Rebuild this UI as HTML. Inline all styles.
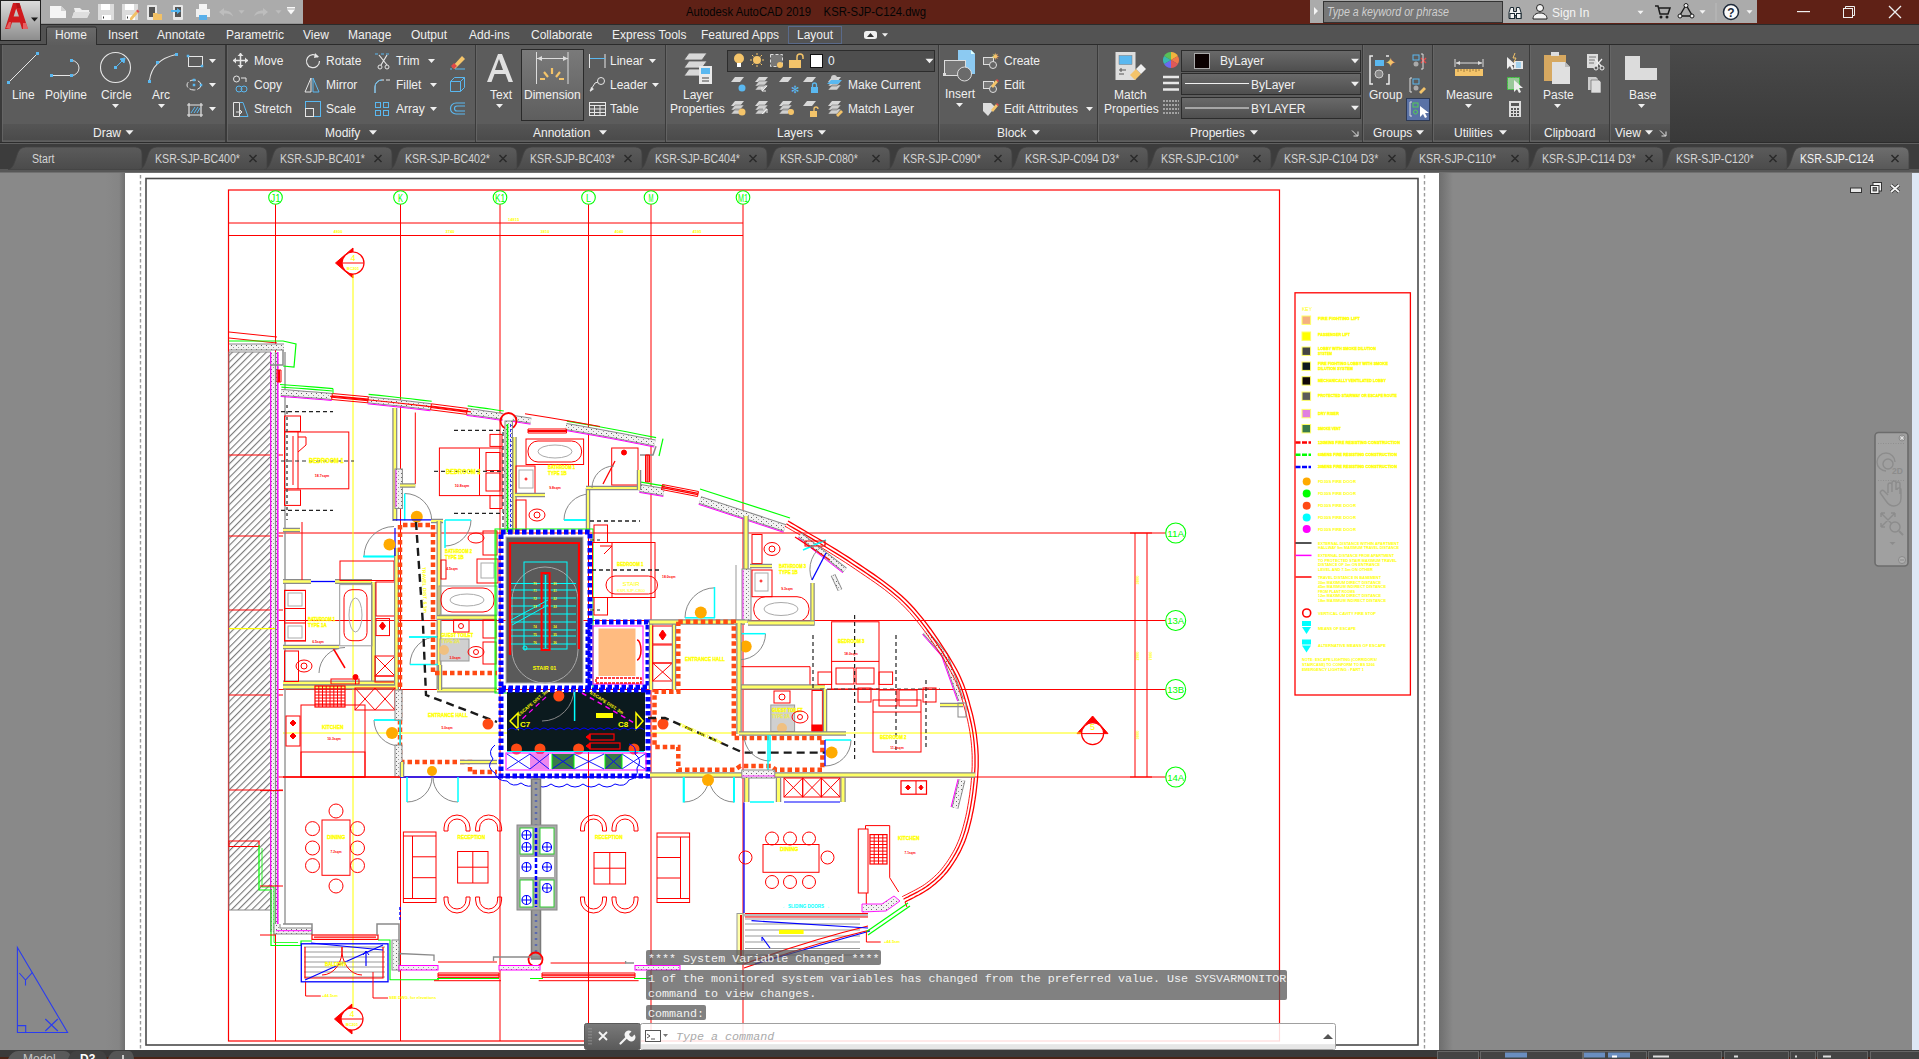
<!DOCTYPE html>
<html><head><meta charset="utf-8">
<style>
*{margin:0;padding:0}
html,body{width:1919px;height:1059px;overflow:hidden;background:#898989}
svg{position:absolute;left:0;top:0;font-family:"Liberation Sans",sans-serif}
</style></head><body>
<svg width="1919" height="1059" viewBox="0 0 1919 1059">
<defs>
<linearGradient id="gLogo" x1="0" y1="0" x2="0" y2="1"><stop offset="0" stop-color="#dcdcdc"/><stop offset="1" stop-color="#8c8c8c"/></linearGradient>
<linearGradient id="gPl" x1="0" y1="0" x2="0" y2="1"><stop offset="0" stop-color="#555"/><stop offset="1" stop-color="#4a4a4a"/></linearGradient>
<linearGradient id="gTab" x1="0" y1="0" x2="0" y2="1"><stop offset="0" stop-color="#5b5b5b"/><stop offset="1" stop-color="#4b4b4b"/></linearGradient>
<linearGradient id="gTabA" x1="0" y1="0" x2="0" y2="1"><stop offset="0" stop-color="#6e6e6e"/><stop offset="1" stop-color="#585858"/></linearGradient>
<linearGradient id="gHome" x1="0" y1="0" x2="0" y2="1"><stop offset="0" stop-color="#6a6a6a"/><stop offset="1" stop-color="#5d5d5d"/></linearGradient>
<linearGradient id="gDim" x1="0" y1="0" x2="0" y2="1"><stop offset="0" stop-color="#7a7a7a"/><stop offset="1" stop-color="#5e5e5e"/></linearGradient>
<linearGradient id="gShadL" x1="0" y1="0" x2="1" y2="0"><stop offset="0" stop-color="#898989"/><stop offset="0.7" stop-color="#858585"/><stop offset="1" stop-color="#707070"/></linearGradient>
<linearGradient id="gShadR" x1="0" y1="0" x2="1" y2="0"><stop offset="0" stop-color="#6e6e6e"/><stop offset="1" stop-color="#898989"/></linearGradient>
<linearGradient id="gRibR" x1="0" y1="0" x2="0" y2="1"><stop offset="0" stop-color="#4a4a4a"/><stop offset="1" stop-color="#393939"/></linearGradient>
<linearGradient id="gCombo" x1="0" y1="0" x2="0" y2="1"><stop offset="0" stop-color="#6a6a6a"/><stop offset="1" stop-color="#4e4e4e"/></linearGradient>
<linearGradient id="gCmd" x1="0" y1="0" x2="0" y2="1"><stop offset="0" stop-color="#7a7a7a"/><stop offset="1" stop-color="#5a5a5a"/></linearGradient>
<pattern id="hatch" width="4.8" height="4.8" patternUnits="userSpaceOnUse" patternTransform="rotate(45)"><rect width="4.8" height="4.8" fill="#fff"/><line x1="0.6" y1="0" x2="0.6" y2="4.8" stroke="#6a6a6a" stroke-width="1"/></pattern>
</defs>

<rect x="0" y="173" width="1919" height="877" fill="#898989"/>
<rect x="105" y="173" width="20" height="877" fill="url(#gShadL)"/>
<rect x="1439" y="173" width="14" height="877" fill="url(#gShadR)"/>
<rect x="1912" y="173" width="7" height="877" fill="#dde7f5"/>
<rect x="125" y="173" width="1314" height="877" fill="#ffffff"/>
<path d="M140.5 175V1050M1424.5 175V1050" stroke="#9a9a9a" stroke-width="1.4" stroke-dasharray="3.5 2.5"/>
<rect x="146" y="178.5" width="1272" height="866.5" fill="none" stroke="#4a4a4a" stroke-width="1.6"/>
<g stroke-linecap="butt">
<rect x="228.5" y="190" width="1051" height="851" stroke="#ff0000" stroke-width="1.2" fill="none"/>
<circle cx="275.5" cy="197.5" r="6.8" stroke="#00ff00" stroke-width="1.1" fill="none"/>
<text x="275.5" y="201.5" font-size="10" fill="#00ff00" text-anchor="middle" textLength="10" lengthAdjust="spacingAndGlyphs">J1</text>
<line x1="275.5" y1="204.5" x2="275.5" y2="1041" stroke="#ff0000" stroke-width="1"/>
<circle cx="400.5" cy="197.5" r="6.8" stroke="#00ff00" stroke-width="1.1" fill="none"/>
<text x="400.5" y="201.5" font-size="10" fill="#00ff00" text-anchor="middle" textLength="5" lengthAdjust="spacingAndGlyphs">K</text>
<line x1="400.5" y1="204.5" x2="400.5" y2="1041" stroke="#ff0000" stroke-width="1"/>
<circle cx="500" cy="197.5" r="6.8" stroke="#00ff00" stroke-width="1.1" fill="none"/>
<text x="500" y="201.5" font-size="10" fill="#00ff00" text-anchor="middle" textLength="10" lengthAdjust="spacingAndGlyphs">K1</text>
<line x1="500" y1="204.5" x2="500" y2="1041" stroke="#ff0000" stroke-width="1"/>
<circle cx="588.5" cy="197.5" r="6.8" stroke="#00ff00" stroke-width="1.1" fill="none"/>
<text x="588.5" y="201.5" font-size="10" fill="#00ff00" text-anchor="middle" textLength="5" lengthAdjust="spacingAndGlyphs">L</text>
<line x1="588.5" y1="204.5" x2="588.5" y2="1041" stroke="#ff0000" stroke-width="1"/>
<circle cx="651" cy="197.5" r="6.8" stroke="#00ff00" stroke-width="1.1" fill="none"/>
<text x="651" y="201.5" font-size="10" fill="#00ff00" text-anchor="middle" textLength="5" lengthAdjust="spacingAndGlyphs">M</text>
<line x1="651" y1="204.5" x2="651" y2="1041" stroke="#ff0000" stroke-width="1"/>
<circle cx="743" cy="197.5" r="6.8" stroke="#00ff00" stroke-width="1.1" fill="none"/>
<text x="743" y="201.5" font-size="10" fill="#00ff00" text-anchor="middle" textLength="10" lengthAdjust="spacingAndGlyphs">M1</text>
<line x1="743" y1="204.5" x2="743" y2="1041" stroke="#ff0000" stroke-width="1"/>
<line x1="228" y1="223" x2="743" y2="223" stroke="#ff0000" stroke-width="1"/>
<line x1="228" y1="235.5" x2="743" y2="235.5" stroke="#ff0000" stroke-width="1"/>
<text x="338" y="233" font-size="4" fill="#ffff00" text-anchor="middle" font-weight="bold" >4800</text>
<text x="450" y="233" font-size="4" fill="#ffff00" text-anchor="middle" font-weight="bold" >3740</text>
<text x="545" y="233" font-size="4" fill="#ffff00" text-anchor="middle" font-weight="bold" >3810</text>
<text x="619" y="233" font-size="4" fill="#ffff00" text-anchor="middle" font-weight="bold" >4040</text>
<text x="697" y="233" font-size="4" fill="#ffff00" text-anchor="middle" font-weight="bold" >4595</text>
<text x="508" y="220.5" font-size="4" fill="#ffff00" text-anchor="start" font-weight="bold" >14815</text>
<line x1="228" y1="533" x2="1165.5" y2="533" stroke="#ff0000" stroke-width="1"/>
<circle cx="1175.7" cy="533" r="10" stroke="#00ff00" stroke-width="1.1" fill="none"/>
<text x="1175.7" y="536.5" font-size="9" fill="#00ff00" text-anchor="middle" textLength="17" lengthAdjust="spacingAndGlyphs">11A</text>
<line x1="228" y1="620.5" x2="1165.5" y2="620.5" stroke="#ff0000" stroke-width="1"/>
<circle cx="1175.7" cy="620.5" r="10" stroke="#00ff00" stroke-width="1.1" fill="none"/>
<text x="1175.7" y="624" font-size="9" fill="#00ff00" text-anchor="middle" textLength="17" lengthAdjust="spacingAndGlyphs">13A</text>
<line x1="228" y1="689.5" x2="1165.5" y2="689.5" stroke="#ff0000" stroke-width="1"/>
<circle cx="1175.7" cy="689.5" r="10" stroke="#00ff00" stroke-width="1.1" fill="none"/>
<text x="1175.7" y="693" font-size="9" fill="#00ff00" text-anchor="middle" textLength="17" lengthAdjust="spacingAndGlyphs">13B</text>
<line x1="228" y1="777" x2="1165.5" y2="777" stroke="#ff0000" stroke-width="1"/>
<circle cx="1175.7" cy="777" r="10" stroke="#00ff00" stroke-width="1.1" fill="none"/>
<text x="1175.7" y="780.5" font-size="9" fill="#00ff00" text-anchor="middle" textLength="17" lengthAdjust="spacingAndGlyphs">14A</text>
<line x1="1135" y1="533" x2="1135" y2="777" stroke="#ff0000" stroke-width="1"/>
<line x1="1147" y1="533" x2="1147" y2="777" stroke="#ff0000" stroke-width="1"/>
<line x1="1130" y1="533" x2="1152" y2="533" stroke="#ff0000" stroke-width="1"/>
<line x1="1130" y1="620.5" x2="1152" y2="620.5" stroke="#ff0000" stroke-width="1"/>
<line x1="1130" y1="689.5" x2="1152" y2="689.5" stroke="#ff0000" stroke-width="1"/>
<line x1="1130" y1="777" x2="1152" y2="777" stroke="#ff0000" stroke-width="1"/>
<text x="1139" y="580" font-size="4" fill="#ffff00" text-anchor="middle" font-weight="bold" transform="rotate(-90 1139 580)">3000</text>
<text x="1139" y="656" font-size="4" fill="#ffff00" text-anchor="middle" font-weight="bold" transform="rotate(-90 1139 656)">2000</text>
<text x="1139" y="735" font-size="4" fill="#ffff00" text-anchor="middle" font-weight="bold" transform="rotate(-90 1139 735)">3000</text>
<text x="1152" y="656" font-size="4" fill="#ffff00" text-anchor="middle" font-weight="bold" transform="rotate(-90 1152 656)">7000</text>
<path d="M335.5 263 L353 248 L353 278 Z" stroke="#ff0000" stroke-width="1" fill="#ff0000" />
<circle cx="353" cy="263" r="11" stroke="#ff0000" stroke-width="1.2" fill="#fff"/>
<line x1="342" y1="263" x2="364" y2="263" stroke="#ff0000" stroke-width="1"/>
<text x="353" y="260.5" font-size="9" fill="#ffff00" text-anchor="middle" >4</text>
<text x="353" y="270" font-size="4" fill="#ffff00" text-anchor="middle" font-weight="bold" >BC201</text>
<path d="M334.5 1019 L352 1004 L352 1034 Z" stroke="#ff0000" stroke-width="1" fill="#ff0000" />
<circle cx="352" cy="1019" r="11" stroke="#ff0000" stroke-width="1.2" fill="#fff"/>
<line x1="341" y1="1019" x2="363" y2="1019" stroke="#ff0000" stroke-width="1"/>
<text x="352" y="1016.5" font-size="9" fill="#ffff00" text-anchor="middle" >4</text>
<text x="352" y="1026" font-size="4" fill="#ffff00" text-anchor="middle" font-weight="bold" >BC201</text>
<path d="M1077 733.6 L1092.6 716 L1108 733.6 Z" stroke="#ff0000" stroke-width="1" fill="#ff0000" />
<circle cx="1092.6" cy="733.6" r="11" stroke="#ff0000" stroke-width="1.2" fill="#fff"/>
<line x1="1081.6" y1="733.6" x2="1103.6" y2="733.6" stroke="#ff0000" stroke-width="1"/>
<text x="1092.6" y="730" font-size="9" fill="#ffff00" text-anchor="middle" >5</text>
<line x1="353" y1="275" x2="353" y2="1007" stroke="#ffff00" stroke-width="1"/>
<line x1="283" y1="733" x2="1081" y2="733" stroke="#ffff00" stroke-width="1"/>
<defs><pattern id="dots" width="5" height="4" patternUnits="userSpaceOnUse"><rect width="5" height="4" fill="#f2f2f2"/><rect x="1" y="1" width="1" height="1" fill="#666"/><rect x="3" y="3" width="1" height="1" fill="#999"/></pattern></defs>
<rect x="229" y="352" width="41.5" height="558" fill="url(#hatch)" stroke="#888" stroke-width="1"/>
<line x1="229" y1="455" x2="283" y2="455" stroke="#ff0000" stroke-width="1"/>
<line x1="229" y1="536" x2="283" y2="536" stroke="#ff0000" stroke-width="1"/>
<line x1="229" y1="610" x2="283" y2="610" stroke="#ff0000" stroke-width="1"/>
<line x1="229" y1="695" x2="283" y2="695" stroke="#ff0000" stroke-width="1"/>
<line x1="229" y1="790" x2="283" y2="790" stroke="#ff0000" stroke-width="1"/>
<rect x="229" y="841" width="30" height="5.5" stroke="#ff0000" stroke-width="1" fill="none"/>
<rect x="271" y="352" width="7.5" height="580" fill="url(#dots)"/>
<line x1="270.7" y1="352" x2="270.7" y2="932" stroke="#ff00ff" stroke-width="1.2"/>
<line x1="275.5" y1="352" x2="275.5" y2="932" stroke="#888" stroke-width="1.2"/>
<line x1="277.8" y1="352" x2="277.8" y2="932" stroke="#ff00ff" stroke-width="1.4"/>
<line x1="285" y1="352" x2="285" y2="924" stroke="#8a8a8a" stroke-width="1.3"/>
<line x1="229" y1="628.7" x2="275" y2="628.7" stroke="#ffff00" stroke-width="1.2"/>
<line x1="229" y1="332" x2="277" y2="337" stroke="#ff0000" stroke-width="1"/>
<line x1="229" y1="338" x2="277" y2="343" stroke="#ff0000" stroke-width="1"/>
<path d="M229 341 L283 341 L296 344 L294 367 L283 366" stroke="#00ff00" stroke-width="1.2" fill="none"/>
<path d="M229.0 347.0 L284.0 347.0" stroke="#8a8a8a" stroke-width="7" fill="none"/>
<path d="M229.0 347.0 L284.0 347.0" stroke="url(#dots)" stroke-width="5" fill="none"/>
<path d="M283 350 L283 365 L270 365" stroke="#8a8a8a" stroke-width="1.5" fill="none"/>
<path d="M277 370 L277 382 L281 382 L281 370 Z" stroke="#ff0000" stroke-width="1" fill="none"/>
<line x1="278.5" y1="370" x2="278.5" y2="382" stroke="#ff0000" stroke-width="1.1"/>
<line x1="279.5" y1="370" x2="279.5" y2="382" stroke="#ff0000" stroke-width="1.1"/>
<path d="M281.0 392.5 L289.5 393.1 L298.0 393.8 L306.5 394.4 L315.0 395.1 L323.5 395.8 L332.0 396.5" stroke="#8a8a8a" stroke-width="7" fill="none"/>
<path d="M281.0 392.5 L289.5 393.1 L298.0 393.8 L306.5 394.4 L315.0 395.1 L323.5 395.8 L332.0 396.5" stroke="url(#dots)" stroke-width="5" fill="none"/>
<path d="M281.4 387.1 L289.9 387.7 L298.4 388.3 L306.9 388.9 L315.4 389.6 L324 390.3 L332.5 391" stroke="#00ff00" stroke-width="1.1" fill="none"/>
<path d="M280.7 396.5 L289.2 397.1 L297.7 397.7 L306.2 398.4 L314.7 399.1 L323.2 399.7 L331.7 400.5" stroke="#ff00ff" stroke-width="1" fill="none"/>
<path d="M368.0 399.8 L378.5 400.9 L389.0 402.0 L399.5 403.1 L410.0 404.3 L420.5 405.5 L431.0 406.8" stroke="#8a8a8a" stroke-width="7" fill="none"/>
<path d="M368.0 399.8 L378.5 400.9 L389.0 402.0 L399.5 403.1 L410.0 404.3 L420.5 405.5 L431.0 406.8" stroke="url(#dots)" stroke-width="5" fill="none"/>
<path d="M368.6 394.4 L379.1 395.4 L389.6 396.5 L400.1 397.7 L410.6 398.8 L421.2 400.1 L431.7 401.3" stroke="#00ff00" stroke-width="1.1" fill="none"/>
<path d="M367.6 403.8 L378.1 404.9 L388.6 406 L399.1 407.1 L409.5 408.3 L420 409.5 L430.5 410.8" stroke="#ff00ff" stroke-width="1" fill="none"/>
<path d="M467.0 411.4 L473.0 412.2 L479.0 413.0 L485.0 413.9 L491.0 414.7 L497.0 415.6 L503.0 416.5" stroke="#8a8a8a" stroke-width="7" fill="none"/>
<path d="M467.0 411.4 L473.0 412.2 L479.0 413.0 L485.0 413.9 L491.0 414.7 L497.0 415.6 L503.0 416.5" stroke="url(#dots)" stroke-width="5" fill="none"/>
<path d="M467.7 405.9 L473.8 406.8 L479.8 407.6 L485.8 408.4 L491.8 409.3 L497.8 410.2 L503.8 411" stroke="#00ff00" stroke-width="1.1" fill="none"/>
<path d="M466.5 415.4 L472.5 416.2 L478.4 417 L484.4 417.8 L490.4 418.7 L496.4 419.6 L502.4 420.4" stroke="#ff00ff" stroke-width="1" fill="none"/>
<path d="M566.0 426.5 L580.8 429.0 L595.7 431.7 L610.5 434.4 L625.3 437.2 L640.2 440.1 L655.0 443.0" stroke="#8a8a8a" stroke-width="7" fill="none"/>
<path d="M566.0 426.5 L580.8 429.0 L595.7 431.7 L610.5 434.4 L625.3 437.2 L640.2 440.1 L655.0 443.0" stroke="url(#dots)" stroke-width="5" fill="none"/>
<path d="M566.9 421.1 L581.8 423.6 L596.7 426.3 L611.5 429 L626.4 431.8 L641.2 434.7 L656.1 437.6" stroke="#00ff00" stroke-width="1.1" fill="none"/>
<path d="M565.3 430.4 L580.1 433 L594.9 435.6 L609.8 438.3 L624.6 441.1 L639.4 444 L654.2 447" stroke="#ff00ff" stroke-width="1" fill="none"/>
<path d="M513.0 418.0 L522.0 419.3 L531.0 420.7" stroke="#8a8a8a" stroke-width="6" fill="none"/>
<path d="M513.0 418.0 L522.0 419.3 L531.0 420.7" stroke="url(#dots)" stroke-width="4" fill="none"/>
<path d="M512.5 421.4 L521.5 422.8 L530.5 424.2" stroke="#ff00ff" stroke-width="1" fill="none"/>
<path d="M331.7 399.5 L367.7 402.8 L368.3 396.8 L332.3 393.5 Z" stroke="#ff0000" stroke-width="1" fill="none"/>
<line x1="331.9" y1="397.2" x2="367.9" y2="400.6" stroke="#ff0000" stroke-width="1.1"/>
<line x1="332.1" y1="395.7" x2="368.1" y2="399.1" stroke="#ff0000" stroke-width="1.1"/>
<path d="M430.6 409.8 L466.6 414.4 L467.4 408.4 L431.4 403.8 Z" stroke="#ff0000" stroke-width="1" fill="none"/>
<line x1="430.9" y1="407.5" x2="466.9" y2="412.1" stroke="#ff0000" stroke-width="1.1"/>
<line x1="431.1" y1="406" x2="467.1" y2="410.7" stroke="#ff0000" stroke-width="1.1"/>
<path d="M330 396.3 L353.5 398.4 L377 400.7 L400.5 403.2 L424 405.9 L447.5 408.8 L471 411.9" stroke="#ff0000" stroke-width="1.1" fill="none"/>
<path d="M525 413.8 L550 417.8 L575 422 L600 426.5" stroke="#ff0000" stroke-width="1.1" fill="none"/>
<path d="M280 384.5 L297.7 385.7 L315.3 387.1 L333 388.6" stroke="#00ff00" stroke-width="1.1" fill="none"/>
<line x1="333" y1="388.6" x2="333" y2="393.6" stroke="#00ff00" stroke-width="1"/>
<path d="M663 438.7 L659 456" stroke="#00ff00" stroke-width="1.2" fill="none"/>
<path d="M656 446.2 L653 455 L640 455" stroke="#8a8a8a" stroke-width="1.5" fill="none"/>
<path d="M528 433 L566.5 433 L566.5 429 L528 429 Z" stroke="#ff0000" stroke-width="1" fill="none"/>
<line x1="528" y1="431.5" x2="566.5" y2="431.5" stroke="#ff0000" stroke-width="1.1"/>
<line x1="528" y1="430.5" x2="566.5" y2="430.5" stroke="#ff0000" stroke-width="1.1"/>
<circle cx="508.5" cy="421" r="8" stroke="#ff0000" stroke-width="1.8" fill="none"/>
<path d="M645.5 455 L645.5 482 L649.5 482 L649.5 455 Z" stroke="#ff0000" stroke-width="1" fill="none"/>
<line x1="647" y1="455" x2="647" y2="482" stroke="#ff0000" stroke-width="1.1"/>
<line x1="648" y1="455" x2="648" y2="482" stroke="#ff0000" stroke-width="1.1"/>
<path d="M640.0 488.0 L664.0 492.0" stroke="#8a8a8a" stroke-width="8" fill="none"/>
<path d="M640.0 488.0 L664.0 492.0" stroke="url(#dots)" stroke-width="6" fill="none"/>
<path d="M641 482.1 L665 486.1" stroke="#00ff00" stroke-width="1.1" fill="none"/>
<path d="M639.3 492.4 L663.3 496.4" stroke="#ff00ff" stroke-width="1" fill="none"/>
<path d="M661.5 489.5 L697.5 496.5 L698.5 491.5 L662.5 484.5 Z" stroke="#ff0000" stroke-width="1" fill="none"/>
<line x1="661.9" y1="487.6" x2="697.9" y2="494.6" stroke="#ff0000" stroke-width="1.1"/>
<line x1="662.1" y1="486.4" x2="698.1" y2="493.4" stroke="#ff0000" stroke-width="1.1"/>
<path d="M700.0 500.0 L785.0 528.0" stroke="#8a8a8a" stroke-width="8" fill="none"/>
<path d="M700.0 500.0 L785.0 528.0" stroke="url(#dots)" stroke-width="6" fill="none"/>
<path d="M698.6 504.3 L783.6 532.3" stroke="#ff00ff" stroke-width="1" fill="none"/>
<line x1="700" y1="489" x2="790" y2="518" stroke="#00ff00" stroke-width="1.2"/>
<path d="M925.0 632.0 L945.0 655.0 L961.0 700.0" stroke="#8a8a8a" stroke-width="6" fill="none"/>
<path d="M925.0 632.0 L945.0 655.0 L961.0 700.0" stroke="url(#dots)" stroke-width="4" fill="none"/>
<path d="M922.4 634.3 L941.7 656.2 L957.7 701.2" stroke="#ff00ff" stroke-width="1" fill="none"/>
<path d="M788 521 L791.2 522.9 L795.3 525.3 L800.1 528.1 L805.5 531.3 L811.3 534.7 L817.5 538.3 L823.9 542.1 L830.3 546 L836.7 549.9 L842.8 553.7 L848.6 557.4 L854 561 L859.1 564.4 L864.1 567.8 L869 571.1 L873.9 574.4 L878.6 577.8 L883.4 581.2 L888 584.7 L892.6 588.2 L897.1 591.9 L901.5 595.8 L905.8 599.8 L910 604 L914.2 608.5 L918.3 613.3 L922.5 618.4 L926.6 623.6 L930.6 629 L934.4 634.4 L938.2 639.9 L941.8 645.3 L945.2 650.5 L948.4 655.6 L951.3 660.5 L954 665 L956.4 669.3 L958.5 673.3 L960.4 677.2 L962 681 L963.5 684.6 L964.8 688.1 L966 691.6 L967.1 695 L968.1 698.5 L969.1 701.9 L970 705.4 L971 709 L972 712.6 L972.9 716.2 L973.7 719.8 L974.4 723.4 L975.1 727 L975.7 730.5 L976.3 734.1 L976.7 737.7 L977.1 741.2 L977.5 744.8 L977.8 748.4 L978 752 L978.2 755.6 L978.2 759.2 L978.2 762.9 L978.2 766.5 L978 770.2 L977.8 773.8 L977.6 777.5 L977.3 781.1 L976.9 784.8 L976.5 788.4 L976.1 792 L975.6 795.6 L975.1 799.2 L974.5 802.9 L973.9 806.6 L973.2 810.3 L972.4 814 L971.7 817.7 L970.8 821.3 L969.9 824.8 L969 828.3 L968.1 831.7 L967 834.9 L966 838 L964.9 841 L963.8 843.8 L962.5 846.6 L961.3 849.3 L960 851.9 L958.6 854.4 L957.3 856.8 L955.9 859.2 L954.4 861.5 L953 863.7 L951.5 865.9 L950 868 L948.5 870 L947 872 L945.4 873.8 L943.8 875.6 L942.2 877.3 L940.6 879 L938.9 880.6 L937.2 882.1 L935.4 883.7 L933.7 885.1 L931.9 886.6 L930 888 L928 889.4 L925.8 890.8 L923.5 892.2 L921.1 893.6 L918.7 895 L916.2 896.2 L913.9 897.5 L911.7 898.6 L909.6 899.6 L907.8 900.5 L906.2 901.3 L905 902" stroke="#ff0000" stroke-width="1.3" fill="none"/>
<path d="M786.4 523.7 L789.6 525.7 L793.7 528.1 L798.5 530.9 L803.9 534 L809.7 537.4 L815.9 541.1 L822.2 544.8 L828.6 548.7 L835 552.6 L841.1 556.4 L846.9 560.1 L852.2 563.7 L857.3 567.1 L862.3 570.4 L867.2 573.8 L872 577.1 L876.8 580.4 L881.5 583.8 L886.1 587.2 L890.6 590.7 L895 594.4 L899.3 598.1 L903.6 602.1 L907.7 606.2 L911.8 610.6 L915.9 615.4 L920 620.4 L924 625.6 L928 630.9 L931.8 636.3 L935.5 641.7 L939.1 647 L942.5 652.2 L945.6 657.3 L948.6 662.1 L951.2 666.6 L953.6 670.8 L955.7 674.8 L957.5 678.6 L959.1 682.2 L960.5 685.7 L961.8 689.2 L963 692.6 L964 696 L965 699.4 L966 702.8 L966.9 706.3 L967.9 709.8 L968.9 713.4 L969.7 717 L970.5 720.5 L971.3 724 L972 727.5 L972.6 731 L973.1 734.5 L973.6 738.1 L974 741.6 L974.3 745.1 L974.6 748.6 L974.8 752.2 L975 755.7 L975 759.3 L975 762.9 L975 766.4 L974.8 770 L974.6 773.6 L974.4 777.2 L974.1 780.8 L973.7 784.4 L973.3 788 L972.9 791.6 L972.4 795.2 L971.9 798.7 L971.3 802.4 L970.7 806 L970 809.7 L969.3 813.3 L968.5 817 L967.7 820.5 L966.8 824 L965.9 827.4 L965 830.7 L964 833.9 L963 836.9 L961.9 839.8 L960.8 842.6 L959.6 845.3 L958.4 847.9 L957.1 850.4 L955.8 852.9 L954.5 855.2 L953.1 857.5 L951.7 859.8 L950.3 861.9 L948.9 864.1 L947.4 866.1 L945.9 868.1 L944.5 870 L943 871.8 L941.5 873.5 L939.9 875.1 L938.3 876.7 L936.7 878.3 L935.1 879.8 L933.4 881.2 L931.7 882.6 L929.9 884.1 L928.1 885.4 L926.2 886.8 L924.1 888.1 L921.9 889.5 L919.5 890.8 L917.2 892.2 L914.8 893.4 L912.4 894.6 L910.2 895.7 L908.2 896.8 L906.3 897.7 L904.7 898.5 L903.5 899.2" stroke="#ff0000" stroke-width="1.3" fill="none"/>
<path d="M784.9 526.2 L788.2 528.1 L792.3 530.5 L797.1 533.3 L802.5 536.4 L808.3 539.9 L814.4 543.5 L820.8 547.2 L827.2 551.1 L833.5 555 L839.6 558.8 L845.4 562.5 L850.7 566 L855.7 569.4 L860.7 572.8 L865.6 576.1 L870.4 579.4 L875.2 582.7 L879.8 586 L884.4 589.4 L888.8 592.9 L893.2 596.5 L897.5 600.2 L901.6 604.1 L905.7 608.2 L909.7 612.5 L913.7 617.2 L917.8 622.1 L921.8 627.3 L925.7 632.5 L929.5 637.9 L933.2 643.2 L936.8 648.6 L940.1 653.7 L943.3 658.8 L946.2 663.5 L948.8 668 L951.1 672.1 L953.1 676 L954.9 679.7 L956.5 683.3 L957.9 686.8 L959.2 690.1 L960.3 693.5 L961.3 696.8 L962.3 700.1 L963.3 703.5 L964.2 707 L965.2 710.6 L966.2 714.1 L967 717.6 L967.8 721.1 L968.5 724.6 L969.2 728 L969.8 731.5 L970.3 734.9 L970.8 738.4 L971.2 741.9 L971.5 745.3 L971.8 748.8 L972 752.3 L972.2 755.8 L972.2 759.3 L972.2 762.8 L972.2 766.4 L972 769.9 L971.8 773.5 L971.6 777 L971.3 780.6 L971 784.1 L970.6 787.7 L970.1 791.2 L969.7 794.8 L969.1 798.3 L968.6 801.9 L967.9 805.5 L967.3 809.2 L966.6 812.8 L965.8 816.4 L965 819.9 L964.1 823.3 L963.2 826.7 L962.3 829.9 L961.3 833.1 L960.3 836 L959.3 838.8 L958.2 841.5 L957.1 844.1 L955.9 846.7 L954.7 849.1 L953.4 851.5 L952.1 853.8 L950.7 856.1 L949.4 858.3 L948 860.4 L946.6 862.5 L945.1 864.5 L943.7 866.4 L942.3 868.2 L940.9 869.9 L939.4 871.6 L937.9 873.2 L936.4 874.7 L934.8 876.2 L933.2 877.7 L931.6 879.1 L929.9 880.5 L928.2 881.8 L926.4 883.2 L924.6 884.5 L922.6 885.8 L920.5 887.1 L918.2 888.4 L915.8 889.7 L913.5 890.9 L911.2 892.1 L909 893.2 L906.9 894.3 L905.1 895.2 L903.4 896 L902.2 896.7" stroke="#ff0000" stroke-width="0.9" fill="none"/>
<path d="M905 902 L907 907" stroke="#ff0000" stroke-width="1" fill="none"/>
<path d="M833.0 575.0 L840.0 590.0" stroke="#8a8a8a" stroke-width="5" fill="none"/>
<path d="M833.0 575.0 L840.0 590.0" stroke="url(#dots)" stroke-width="3" fill="none"/>
<path d="M800.0 535.0 L845.0 570.0" stroke="#8a8a8a" stroke-width="6" fill="none"/>
<path d="M800.0 535.0 L845.0 570.0" stroke="url(#dots)" stroke-width="4" fill="none"/>
<path d="M797.9 537.8 L842.9 572.8" stroke="#ff00ff" stroke-width="1" fill="none"/>
<path d="M795 537 L830 560" stroke="#ff0000" stroke-width="1.2" fill="none"/>
<line x1="281" y1="411.7" x2="333" y2="411.7" stroke="#222" stroke-width="1.3" stroke-dasharray="4 3"/>
<line x1="281" y1="510.3" x2="333" y2="510.3" stroke="#222" stroke-width="1.3" stroke-dasharray="4 3"/>
<rect x="284.5" y="416" width="16" height="15.4" stroke="#ff0000" stroke-width="1" fill="none"/>
<rect x="284.5" y="490" width="16" height="15.4" stroke="#ff0000" stroke-width="1" fill="none"/>
<rect x="284.5" y="432" width="64.3" height="56.8" stroke="#ff0000" stroke-width="1" fill="none"/>
<line x1="298" y1="432" x2="298" y2="489" stroke="#ff0000" stroke-width="1"/>
<line x1="293" y1="436" x2="293" y2="485" stroke="#ff0000" stroke-width="1"/>
<path d="M298 437 L306 437 L306 445 L298 452" stroke="#ff0000" stroke-width="1" fill="none" />
<line x1="281" y1="461" x2="354" y2="461" stroke="#333" stroke-width="1.2" stroke-dasharray="4 3"/>
<text x="309" y="463" font-size="7.199999999999999" fill="#ffff00" text-anchor="start" font-weight="bold" stroke="#ffff00" stroke-width="0.35" textLength="34.6" lengthAdjust="spacingAndGlyphs">BEDROOM 1</text>
<text x="322" y="477" font-size="3.6" fill="#ff0000" text-anchor="middle" font-weight="bold" >18.7sqm</text>
<line x1="287" y1="405" x2="287" y2="520" stroke="#444" stroke-width="1.4" stroke-dasharray="3 3"/>
<path d="M394.8 408.0 L394.8 521.0" stroke="#8a8a8a" stroke-width="5.0" fill="none"/>
<path d="M394.8 408.0 L394.8 521.0" stroke="#ffff66" stroke-width="2.5" fill="none"/>
<rect x="395" y="469" width="7.4" height="39.5" stroke="#8a8a8a" stroke-width="1" fill="url(#dots)"/>
<line x1="396" y1="470" x2="396" y2="507" stroke="#ff00ff" stroke-width="0.8"/>
<line x1="415.3" y1="412.5" x2="415.3" y2="484" stroke="#ff0000" stroke-width="1"/>
<path d="M400.0 485.5 L415.3 485.5" stroke="#8a8a8a" stroke-width="4.5" fill="none"/>
<path d="M400.0 485.5 L415.3 485.5" stroke="#ffff66" stroke-width="2" fill="none"/>
<path d="M404.7 493.5 A27 27 0 0 1 431.7 520.5" stroke="#888" stroke-width="1" fill="none" />
<line x1="404.7" y1="520.5" x2="404.7" y2="493.5" stroke="#00ffff" stroke-width="1.5"/>
<circle cx="416.8" cy="516.8" r="6" stroke="#ffaa00" stroke-width="0" fill="#ffaa00"/>
<line x1="393" y1="519.8" x2="431" y2="519.8" stroke="#0000ff" stroke-width="1.2"/>
<path d="M431.0 521.0 L443.0 521.0" stroke="#8a8a8a" stroke-width="4.5" fill="none"/>
<path d="M431.0 521.0 L443.0 521.0" stroke="#ffff66" stroke-width="2" fill="none"/>
<line x1="454" y1="430.3" x2="504" y2="430.3" stroke="#222" stroke-width="1.3" stroke-dasharray="4 3"/>
<line x1="454" y1="513.3" x2="504" y2="513.3" stroke="#222" stroke-width="1.3" stroke-dasharray="4 3"/>
<rect x="490" y="434.4" width="12" height="12" stroke="#ff0000" stroke-width="1" fill="none"/>
<rect x="490" y="495.6" width="12" height="12.9" stroke="#ff0000" stroke-width="1" fill="none"/>
<rect x="439.4" y="448" width="62.6" height="47.6" stroke="#ff0000" stroke-width="1" fill="none"/>
<line x1="479.5" y1="448" x2="479.5" y2="495.6" stroke="#ff0000" stroke-width="1"/>
<rect x="486" y="452.5" width="14" height="18" stroke="#ff0000" stroke-width="1" fill="none"/>
<rect x="486" y="473" width="14" height="18" stroke="#ff0000" stroke-width="1" fill="none"/>
<line x1="434" y1="471.4" x2="510" y2="471.4" stroke="#333" stroke-width="1.2" stroke-dasharray="4 3"/>
<text x="446" y="473.5" font-size="7.199999999999999" fill="#ffff00" text-anchor="start" font-weight="bold" stroke="#ffff00" stroke-width="0.35" textLength="34.6" lengthAdjust="spacingAndGlyphs">BEDROOM 2</text>
<text x="462" y="487" font-size="3.6" fill="#ff0000" text-anchor="middle" font-weight="bold" >10.8sqm</text>
<rect x="505" y="421" width="7.5" height="112" fill="url(#dots)" stroke="#8a8a8a" stroke-width="1"/>
<line x1="507.5" y1="424" x2="507.5" y2="532" stroke="#00ff00" stroke-width="1.6"/>
<line x1="510.5" y1="424" x2="510.5" y2="532" stroke="#0000ff" stroke-width="0.8" stroke-dasharray="3 2"/>
<line x1="503" y1="432" x2="503" y2="532" stroke="#333" stroke-width="1.2" stroke-dasharray="4 3"/>
<path d="M514.5 437.0 L514.5 532.0" stroke="#8a8a8a" stroke-width="4.5" fill="none"/>
<path d="M514.5 437.0 L514.5 532.0" stroke="#ffff66" stroke-width="2" fill="none"/>
<rect x="526" y="439" width="57.6" height="25.5" stroke="#ff0000" stroke-width="1" fill="none"/>
<rect x="528" y="441" width="53.6" height="21" stroke="#ff0000" stroke-width="1" fill="none" rx="10"/>
<ellipse cx="555" cy="451.5" rx="17" ry="6.5" stroke="#aaa" fill="none" stroke-width="1"/>
<rect x="516" y="466" width="19" height="28" stroke="#ff0000" stroke-width="1" fill="none"/>
<rect x="519" y="470" width="14" height="18" stroke="#aaa" stroke-width="1" fill="none"/>
<circle cx="526" cy="479" r="1" stroke="#ff0000" stroke-width="1" fill="none"/>
<path d="M515.0 495.0 L545.0 495.0" stroke="#8a8a8a" stroke-width="4.5" fill="none"/>
<path d="M515.0 495.0 L545.0 495.0" stroke="#ffff66" stroke-width="2" fill="none"/>
<rect x="516" y="500" width="10" height="30" stroke="#ff0000" stroke-width="1" fill="none"/>
<ellipse cx="537" cy="515" rx="8" ry="6" stroke="#f00" fill="none"/>
<circle cx="537" cy="515" r="3" stroke="#ff0000" stroke-width="1" fill="none"/>
<text x="548" y="469" font-size="5.04" fill="#ffff00" text-anchor="start" font-weight="bold" stroke="#ffff00" stroke-width="0.35" textLength="26.9" lengthAdjust="spacingAndGlyphs">BATHROOM 1</text>
<text x="548" y="475" font-size="5.04" fill="#ffff00" text-anchor="start" font-weight="bold" stroke="#ffff00" stroke-width="0.35" textLength="18.8" lengthAdjust="spacingAndGlyphs">TYPE 1B</text>
<text x="555" y="489" font-size="3.4" fill="#ff0000" text-anchor="middle" font-weight="bold" >9.8sqm</text>
<path d="M564.0 520.0 A26 26 0 0 1 590.0 494.0" stroke="#888" stroke-width="1" fill="none" />
<line x1="590" y1="520" x2="564" y2="520" stroke="#00ffff" stroke-width="1.5"/>
<line x1="564" y1="520" x2="588" y2="520" stroke="#00ffff" stroke-width="1.5"/>
<path d="M588.0 488.0 L588.0 532.0" stroke="#8a8a8a" stroke-width="4.5" fill="none"/>
<path d="M588.0 488.0 L588.0 532.0" stroke="#ffff66" stroke-width="2" fill="none"/>
<path d="M586.0 488.0 L640.0 488.0" stroke="#8a8a8a" stroke-width="4.5" fill="none"/>
<path d="M586.0 488.0 L640.0 488.0" stroke="#ffff66" stroke-width="2" fill="none"/>
<rect x="611.7" y="448" width="26.3" height="37" stroke="#ff0000" stroke-width="1" fill="none"/>
<circle cx="624" cy="452.5" r="2.5" stroke="#ff0000" stroke-width="1" fill="#ff0000"/>
<line x1="603" y1="484" x2="615" y2="461" stroke="#ff0000" stroke-width="1.3"/>
<path d="M592 488 A22 22 0 0 1 614 466" stroke="#888" stroke-width="1" fill="none" />
<path d="M639.0 470.0 L639.0 490.0" stroke="#8a8a8a" stroke-width="4.5" fill="none"/>
<path d="M639.0 470.0 L639.0 490.0" stroke="#ffff66" stroke-width="2" fill="none"/>
<line x1="590" y1="521" x2="640" y2="521" stroke="#222" stroke-width="1.3" stroke-dasharray="4 3"/>
<path d="M283.0 581.5 L311.0 581.5" stroke="#8a8a8a" stroke-width="5.0" fill="none"/>
<path d="M283.0 581.5 L311.0 581.5" stroke="#ffff66" stroke-width="2.5" fill="none"/>
<line x1="311" y1="581.5" x2="335" y2="581.5" stroke="#0000ff" stroke-width="1.3"/>
<path d="M335.0 581.5 L372.0 581.5" stroke="#8a8a8a" stroke-width="5.0" fill="none"/>
<path d="M335.0 581.5 L372.0 581.5" stroke="#ffff66" stroke-width="2.5" fill="none"/>
<path d="M283.0 530.0 L300.0 530.0" stroke="#8a8a8a" stroke-width="4.5" fill="none"/>
<path d="M283.0 530.0 L300.0 530.0" stroke="#ffff66" stroke-width="2" fill="none"/>
<line x1="302" y1="522" x2="302" y2="580" stroke="#ff0000" stroke-width="1"/>
<rect x="340" y="561" width="54" height="19.5" stroke="#ff0000" stroke-width="1" fill="none"/>
<path d="M373.5 582.0 L373.5 684.0" stroke="#8a8a8a" stroke-width="5.0" fill="none"/>
<path d="M373.5 582.0 L373.5 684.0" stroke="#ffff66" stroke-width="2.5" fill="none"/>
<path d="M283.0 683.0 L396.0 683.0" stroke="#8a8a8a" stroke-width="5.0" fill="none"/>
<path d="M283.0 683.0 L396.0 683.0" stroke="#ffff66" stroke-width="2.5" fill="none"/>
<rect x="284.5" y="590.5" width="21" height="18" stroke="#ff0000" stroke-width="1" fill="none"/>
<rect x="288" y="593" width="14" height="13" stroke="#aaa" stroke-width="1" fill="none"/>
<rect x="284.5" y="590.3" width="21" height="50.4" stroke="#ff0000" stroke-width="1" fill="none"/>
<rect x="284.5" y="623" width="21" height="18" stroke="#ff0000" stroke-width="1" fill="none"/>
<rect x="288" y="626" width="14" height="12" stroke="#aaa" stroke-width="1" fill="none"/>
<rect x="339.7" y="584.6" width="32.3" height="61.2" stroke="#999" stroke-width="1" fill="none"/>
<rect x="344" y="589.7" width="23" height="51" stroke="#ff0000" stroke-width="1" fill="none" rx="8"/>
<ellipse cx="355.5" cy="615" rx="6.5" ry="17" stroke="#aaa" fill="none"/>
<rect x="284.5" y="651" width="14" height="30.5" stroke="#ff0000" stroke-width="1" fill="none"/>
<ellipse cx="304" cy="666" rx="8" ry="6" stroke="#f00" fill="none"/>
<circle cx="304" cy="666" r="3" stroke="#ff0000" stroke-width="1" fill="none"/>
<path d="M319 673 A26 26 0 0 1 345 647.5" stroke="#888" stroke-width="1" fill="none" />
<line x1="333" y1="648" x2="345" y2="668" stroke="#ff0000" stroke-width="1.5"/>
<path d="M283.0 647.0 L339.0 647.0" stroke="#8a8a8a" stroke-width="4.5" fill="none"/>
<path d="M283.0 647.0 L339.0 647.0" stroke="#ffff66" stroke-width="2" fill="none"/>
<text x="308" y="621" font-size="5.04" fill="#ffff00" text-anchor="start" font-weight="bold" stroke="#ffff00" stroke-width="0.35" textLength="26.9" lengthAdjust="spacingAndGlyphs">BATHROOM 1</text>
<text x="308" y="627" font-size="5.04" fill="#ffff00" text-anchor="start" font-weight="bold" stroke="#ffff00" stroke-width="0.35" textLength="18.8" lengthAdjust="spacingAndGlyphs">TYPE 1A</text>
<text x="318" y="643" font-size="3.4" fill="#ff0000" text-anchor="middle" font-weight="bold" >6.5sqm</text>
<circle cx="355.5" cy="677" r="2.5" stroke="#ff0000" stroke-width="1" fill="#ff0000"/>
<line x1="355.5" y1="679" x2="355.5" y2="690" stroke="#ff0000" stroke-width="1"/>
<rect x="331" y="679" width="28" height="5" stroke="#ff0000" stroke-width="1" fill="none"/>
<rect x="376" y="582" width="19" height="34" stroke="#ff0000" stroke-width="1" fill="none"/>
<rect x="376" y="618.6" width="13.5" height="17" stroke="#ff0000" stroke-width="1" fill="none"/>
<path d="M382.5 622 l3 4 l-3 4 l-3-4z" stroke="#ff0000" stroke-width="1" fill="#ff0000" />
<rect x="375" y="656" width="20" height="20" stroke="#ff0000" stroke-width="1" fill="none"/>
<line x1="375" y1="656" x2="395" y2="676" stroke="#ff0000" stroke-width="1"/>
<line x1="395" y1="656" x2="375" y2="676" stroke="#ff0000" stroke-width="1"/>
<rect x="375" y="676" width="20" height="6" stroke="#ff0000" stroke-width="1" fill="none"/>
<path d="M396.5 548.0 L396.5 690.0" stroke="#8a8a8a" stroke-width="5.0" fill="none"/>
<path d="M396.5 548.0 L396.5 690.0" stroke="#ffff66" stroke-width="2.5" fill="none"/>
<path d="M364.0 556.5 A30 30 0 0 1 394.0 526.5" stroke="#888" stroke-width="1" fill="none" />
<line x1="394" y1="556.5" x2="364" y2="556.5" stroke="#00ffff" stroke-width="1.5"/>
<line x1="363" y1="556.5" x2="394" y2="556.5" stroke="#00ffff" stroke-width="1.8"/>
<line x1="395" y1="528" x2="395" y2="556" stroke="#0000ff" stroke-width="1.2"/>
<circle cx="389.5" cy="544.5" r="6" stroke="#ffaa00" stroke-width="0" fill="#ffaa00"/>
<path d="M439.0 521.0 L439.0 690.0" stroke="#8a8a8a" stroke-width="5.0" fill="none"/>
<path d="M439.0 521.0 L439.0 690.0" stroke="#ffff66" stroke-width="2.5" fill="none"/>
<path d="M471.0 520.0 A26 26 0 0 1 445.0 546.0" stroke="#888" stroke-width="1" fill="none" />
<line x1="445" y1="520" x2="471" y2="520" stroke="#00ffff" stroke-width="1.5"/>
<line x1="445" y1="520" x2="445" y2="548" stroke="#00ffff" stroke-width="1.5"/>
<text x="445" y="553" font-size="5.04" fill="#ffff00" text-anchor="start" font-weight="bold" stroke="#ffff00" stroke-width="0.35" textLength="26.9" lengthAdjust="spacingAndGlyphs">BATHROOM 2</text>
<text x="445" y="559" font-size="5.04" fill="#ffff00" text-anchor="start" font-weight="bold" stroke="#ffff00" stroke-width="0.35" textLength="18.8" lengthAdjust="spacingAndGlyphs">TYPE 1B</text>
<text x="452" y="570" font-size="3.4" fill="#ff0000" text-anchor="middle" font-weight="bold" >4.5sqm</text>
<rect x="441" y="588" width="53" height="24" stroke="#ff0000" stroke-width="1" fill="none" rx="11"/>
<ellipse cx="467" cy="600" rx="17" ry="6" stroke="#aaa" fill="none"/>
<rect x="439" y="586" width="58" height="29" stroke="#999" stroke-width="1" fill="none"/>
<rect x="477" y="559" width="21" height="24" stroke="#ff0000" stroke-width="1" fill="none"/>
<rect x="481" y="563" width="13" height="15" stroke="#aaa" stroke-width="1" fill="none"/>
<rect x="483" y="531" width="14" height="24" stroke="#ff0000" stroke-width="1" fill="none"/>
<ellipse cx="476" cy="538" rx="8" ry="5" stroke="#f00" fill="none"/>
<rect x="441" y="560" width="5" height="19" stroke="#ff0000" stroke-width="1" fill="none"/>
<path d="M437.0 617.5 L497.0 617.5" stroke="#8a8a8a" stroke-width="5.0" fill="none"/>
<path d="M437.0 617.5 L497.0 617.5" stroke="#ffff66" stroke-width="2.5" fill="none"/>
<rect x="440" y="639" width="29" height="22" fill="#d0d0d0" stroke="#999"/>
<text x="441" y="637" font-size="5.04" fill="#ffff00" text-anchor="start" font-weight="bold" stroke="#ffff00" stroke-width="0.35" textLength="32.3" lengthAdjust="spacingAndGlyphs">GUEST TOILET</text>
<text x="441" y="643" font-size="5.04" fill="#e8e860" text-anchor="start" font-weight="bold" stroke="#e8e860" stroke-width="0.35" textLength="18.8" lengthAdjust="spacingAndGlyphs">TYPE 2A</text>
<text x="455" y="659" font-size="3.2" fill="#ff0000" text-anchor="middle" font-weight="bold" >3.0sqm</text>
<circle cx="444" cy="650" r="5" stroke="#f0c080" stroke-width="0" fill="#f0c080"/>
<rect x="453.6" y="620" width="15.4" height="12" stroke="#ff0000" stroke-width="1" fill="none"/>
<circle cx="461" cy="626" r="2.5" stroke="#ff0000" stroke-width="1" fill="none"/>
<rect x="483" y="620" width="13" height="18" stroke="#ff0000" stroke-width="1" fill="none"/>
<rect x="483" y="642" width="13" height="22" stroke="#ff0000" stroke-width="1" fill="none"/>
<ellipse cx="476" cy="652" rx="8" ry="5.5" stroke="#f00" fill="none"/>
<circle cx="476" cy="652" r="2.5" stroke="#ff0000" stroke-width="1" fill="none"/>
<path d="M410.0 664.5 A28 28 0 0 1 438.0 636.5" stroke="#888" stroke-width="1" fill="none" />
<line x1="438" y1="664.5" x2="410" y2="664.5" stroke="#00ffff" stroke-width="1.5"/>
<line x1="409" y1="637" x2="437" y2="637" stroke="#00ffff" stroke-width="1.8"/>
<path d="M437.0 690.0 L497.0 690.0" stroke="#8a8a8a" stroke-width="5.0" fill="none"/>
<path d="M437.0 690.0 L497.0 690.0" stroke="#ffff66" stroke-width="2.5" fill="none"/>
<path d="M440.0 665.0 L440.0 690.0" stroke="#8a8a8a" stroke-width="4.5" fill="none"/>
<path d="M440.0 665.0 L440.0 690.0" stroke="#ffff66" stroke-width="2" fill="none"/>
<line x1="496" y1="530" x2="496" y2="690" stroke="#00ff00" stroke-width="1"/>
<path d="M400 762 L400 525 L433 525 L433 673 L497 673" stroke="#ff4a14" stroke-width="4.5" fill="none" stroke-dasharray="4.5 3"/>
<path d="M400 762 L470 762 L470 772 L497 772" stroke="#ff4a14" stroke-width="4.5" fill="none" stroke-dasharray="4.5 3"/>
<path d="M416 522 L423 625 L426 695 L497 722" stroke="#1a1a1a" stroke-width="2.4" fill="none" stroke-dasharray="8 5"/>
<text x="423" y="590" font-size="5" fill="#ffff00" text-anchor="middle" font-weight="bold" transform="rotate(88 423 590)">TRAVEL DIST. 6.1m</text>
<path d="M283.0 687.0 L395.0 687.0" stroke="#8a8a8a" stroke-width="5.0" fill="none"/>
<path d="M283.0 687.0 L395.0 687.0" stroke="#ffff66" stroke-width="2.5" fill="none"/>
<rect x="315" y="686" width="30" height="21" stroke="#ff0000" stroke-width="1.2" fill="none"/>
<line x1="315" y1="689" x2="345" y2="689" stroke="#ff0000" stroke-width="1"/>
<line x1="315" y1="692" x2="345" y2="692" stroke="#ff0000" stroke-width="1"/>
<line x1="315" y1="695" x2="345" y2="695" stroke="#ff0000" stroke-width="1"/>
<line x1="315" y1="698" x2="345" y2="698" stroke="#ff0000" stroke-width="1"/>
<line x1="315" y1="701" x2="345" y2="701" stroke="#ff0000" stroke-width="1"/>
<line x1="315" y1="704" x2="345" y2="704" stroke="#ff0000" stroke-width="1"/>
<line x1="318.8" y1="686" x2="318.8" y2="707" stroke="#ff0000" stroke-width="1"/>
<line x1="322.5" y1="686" x2="322.5" y2="707" stroke="#ff0000" stroke-width="1"/>
<line x1="326.2" y1="686" x2="326.2" y2="707" stroke="#ff0000" stroke-width="1"/>
<line x1="330" y1="686" x2="330" y2="707" stroke="#ff0000" stroke-width="1"/>
<line x1="333.8" y1="686" x2="333.8" y2="707" stroke="#ff0000" stroke-width="1"/>
<line x1="337.5" y1="686" x2="337.5" y2="707" stroke="#ff0000" stroke-width="1"/>
<line x1="341.2" y1="686" x2="341.2" y2="707" stroke="#ff0000" stroke-width="1"/>
<rect x="355" y="688" width="40" height="22" stroke="#ff0000" stroke-width="1" fill="none"/>
<line x1="355" y1="688" x2="375" y2="710" stroke="#ff0000" stroke-width="1"/>
<line x1="375" y1="688" x2="355" y2="710" stroke="#ff0000" stroke-width="1"/>
<line x1="375" y1="688" x2="395" y2="710" stroke="#ff0000" stroke-width="1"/>
<line x1="395" y1="688" x2="375" y2="710" stroke="#ff0000" stroke-width="1"/>
<rect x="301" y="705" width="64" height="72" stroke="#ff0000" stroke-width="1" fill="none"/>
<rect x="301" y="752" width="64" height="25" stroke="#ff0000" stroke-width="1" fill="none"/>
<rect x="286" y="716" width="14" height="30" stroke="#ff0000" stroke-width="1" fill="none"/>
<path d="M293 720 l3 3 l-3 3 l-3-3z" stroke="#ff0000" stroke-width="1" fill="#ff0000" />
<path d="M293 733 l3 3 l-3 3 l-3-3z" stroke="#ff0000" stroke-width="1" fill="#ff0000" />
<text x="322" y="729" font-size="5.76" fill="#ffff00" text-anchor="start" font-weight="bold" stroke="#ffff00" stroke-width="0.35" textLength="21.5" lengthAdjust="spacingAndGlyphs">KITCHEN</text>
<text x="334" y="740" font-size="3.4" fill="#ff0000" text-anchor="middle" font-weight="bold" >10.3sqm</text>
<path d="M400.0 746.0 A26 26 0 0 1 374.0 720.0" stroke="#888" stroke-width="1" fill="none" />
<line x1="400" y1="720" x2="400" y2="746" stroke="#00ffff" stroke-width="1.5"/>
<line x1="374" y1="720" x2="400" y2="720" stroke="#00ffff" stroke-width="1.8"/>
<circle cx="392" cy="733" r="6" stroke="#ffaa00" stroke-width="0" fill="#ffaa00"/>
<rect x="395" y="745" width="7" height="32" stroke="#8a8a8a" stroke-width="1" fill="url(#dots)"/>
<rect x="395" y="690" width="7" height="30" stroke="#8a8a8a" stroke-width="1" fill="url(#dots)"/>
<line x1="283" y1="777" x2="400" y2="777" stroke="#ff0000" stroke-width="1.5"/>
<line x1="400" y1="777" x2="650" y2="777" stroke="#0000ff" stroke-width="1.3"/>
<text x="428" y="717" font-size="5.76" fill="#ffff00" text-anchor="start" font-weight="bold" stroke="#ffff00" stroke-width="0.35" textLength="39.9" lengthAdjust="spacingAndGlyphs">ENTRANCE HALL</text>
<text x="447" y="729" font-size="3.2" fill="#ff0000" text-anchor="middle" font-weight="bold" >5.0sqm</text>
<path d="M407.0 802.0 A25 25 0 0 0 432.0 777.0" stroke="#888" stroke-width="1" fill="none" />
<line x1="407" y1="777" x2="407" y2="802" stroke="#00ffff" stroke-width="1.5"/>
<path d="M458.0 802.0 A25 25 0 0 1 433.0 777.0" stroke="#888" stroke-width="1" fill="none" />
<line x1="458" y1="777" x2="458" y2="802" stroke="#00ffff" stroke-width="1.5"/>
<circle cx="432" cy="771" r="5" stroke="#ffaa00" stroke-width="0" fill="#ffaa00"/>
<path d="M402.0 762.0 L402.0 777.0" stroke="#8a8a8a" stroke-width="4.5" fill="none"/>
<path d="M402.0 762.0 L402.0 777.0" stroke="#ffff66" stroke-width="2" fill="none"/>
<path d="M460.0 762.0 L497.0 762.0" stroke="#8a8a8a" stroke-width="4.5" fill="none"/>
<path d="M460.0 762.0 L497.0 762.0" stroke="#ffff66" stroke-width="2" fill="none"/>
<rect x="495" y="529" width="98" height="164" stroke="#00ff00" stroke-width="1" fill="none"/>
<rect x="506" y="537" width="77" height="146" fill="#5a5a5a" stroke="#b0b0b0" stroke-width="1"/>
<path d="M512 650 V600 A33 33 0 0 1 578 600 V650 A33 33 0 0 1 512 650 Z" stroke="#a8a8a8" stroke-width="1" fill="none" />
<path d="M510 655 L510 543 L579 543 L579 649" stroke="#ff0000" stroke-width="2.2" fill="none"/>
<rect x="524" y="562" width="43" height="87" stroke="#00ffff" stroke-width="1" fill="none"/>
<line x1="511" y1="583.5" x2="576" y2="583.5" stroke="#00ffff" stroke-width="1"/>
<line x1="511" y1="590" x2="576" y2="590" stroke="#00ffff" stroke-width="1"/>
<line x1="511" y1="598" x2="576" y2="598" stroke="#00ffff" stroke-width="1"/>
<line x1="511" y1="606" x2="576" y2="606" stroke="#00ffff" stroke-width="1"/>
<line x1="511" y1="614" x2="576" y2="614" stroke="#00ffff" stroke-width="1"/>
<line x1="511" y1="622" x2="576" y2="622" stroke="#00ffff" stroke-width="1"/>
<line x1="511" y1="630" x2="576" y2="630" stroke="#00ffff" stroke-width="1"/>
<line x1="511" y1="636" x2="576" y2="636" stroke="#00ffff" stroke-width="1"/>
<line x1="511" y1="644" x2="576" y2="644" stroke="#00ffff" stroke-width="1"/>
<rect x="541.6" y="573" width="8" height="77" stroke="#ff0000" stroke-width="2" fill="none"/>
<line x1="545.5" y1="575" x2="545.5" y2="648" stroke="#00ffff" stroke-width="1.5"/>
<line x1="511" y1="620" x2="548" y2="600" stroke="#00ffff" stroke-width="1"/>
<line x1="512" y1="625" x2="548" y2="605" stroke="#00ffff" stroke-width="1"/>
<circle cx="525" cy="648" r="2" stroke="#00ffff" stroke-width="1" fill="none"/>
<text x="535" y="585" font-size="3" fill="#ffff00" text-anchor="middle" font-weight="bold" >70</text>
<text x="555" y="585" font-size="3" fill="#ffff00" text-anchor="middle" font-weight="bold" >30</text>
<text x="535" y="592" font-size="3" fill="#ffff00" text-anchor="middle" font-weight="bold" >71</text>
<text x="555" y="592" font-size="3" fill="#ffff00" text-anchor="middle" font-weight="bold" >31</text>
<text x="535" y="600" font-size="3" fill="#ffff00" text-anchor="middle" font-weight="bold" >72</text>
<text x="555" y="600" font-size="3" fill="#ffff00" text-anchor="middle" font-weight="bold" >32</text>
<text x="535" y="608" font-size="3" fill="#ffff00" text-anchor="middle" font-weight="bold" >73</text>
<text x="555" y="608" font-size="3" fill="#ffff00" text-anchor="middle" font-weight="bold" >33</text>
<text x="535" y="628" font-size="3" fill="#ffff00" text-anchor="middle" font-weight="bold" >74</text>
<text x="555" y="628" font-size="3" fill="#ffff00" text-anchor="middle" font-weight="bold" >34</text>
<text x="535" y="636" font-size="3" fill="#ffff00" text-anchor="middle" font-weight="bold" >75</text>
<text x="555" y="636" font-size="3" fill="#ffff00" text-anchor="middle" font-weight="bold" >35</text>
<text x="535" y="644" font-size="3" fill="#ffff00" text-anchor="middle" font-weight="bold" >76</text>
<text x="555" y="644" font-size="3" fill="#ffff00" text-anchor="middle" font-weight="bold" >36</text>
<text x="544.5" y="670" font-size="5.5" fill="#ffff00" text-anchor="middle" font-weight="bold" >STAIR 01</text>
<rect x="501" y="532" width="89" height="156" stroke="#0000ff" stroke-width="5" fill="none" stroke-dasharray="4.5 2.5"/>
<rect x="588" y="622" width="60" height="65" stroke="#0000ff" stroke-width="5" fill="none" stroke-dasharray="4.5 2.5"/>
<rect x="593" y="626" width="50" height="58" stroke="#ff00ff" stroke-width="1" fill="none"/>
<rect x="598.5" y="628.5" width="37" height="47.5" fill="#ffbb80"/>
<rect x="596" y="678" width="45" height="5" stroke="#ff0000" stroke-width="1.5" fill="none" stroke-dasharray="3 1"/>
<path d="M637 640 a4 10 0 0 1 0 20" stroke="#f00" stroke-width="1.5" fill="none" />
<rect x="507" y="692" width="138" height="59" fill="#0b1a1e"/>
<rect x="501" y="690" width="147" height="86" stroke="#0000ff" stroke-width="5" fill="none" stroke-dasharray="4.5 2.5"/>
<circle cx="558.8" cy="696" r="5.5" stroke="#ff4a14" stroke-width="0" fill="#ff4a14"/>
<circle cx="516.5" cy="749" r="5.5" stroke="#ff4a14" stroke-width="0" fill="#ff4a14"/>
<circle cx="540" cy="749" r="5.5" stroke="#ff4a14" stroke-width="0" fill="#ff4a14"/>
<circle cx="578.6" cy="749" r="5.5" stroke="#ff4a14" stroke-width="0" fill="#ff4a14"/>
<circle cx="634" cy="749" r="5.5" stroke="#ff4a14" stroke-width="0" fill="#ff4a14"/>
<circle cx="488" cy="724" r="5.5" stroke="#ff4a14" stroke-width="0" fill="#ff4a14"/>
<circle cx="663" cy="724" r="5.5" stroke="#ff4a14" stroke-width="0" fill="#ff4a14"/>
<path d="M510 721 L518 713 L518 729 Z" stroke="#ffff00" stroke-width="1.5" fill="none" />
<text x="520" y="727" font-size="8" fill="#ffff00" text-anchor="start" font-weight="bold" >C7</text>
<path d="M643 721 L636 713 L636 729 Z" stroke="#ffff00" stroke-width="1.5" fill="none" />
<text x="618" y="727" font-size="8" fill="#ffff00" text-anchor="start" font-weight="bold" >C8</text>
<rect x="596" y="713" width="17" height="5" fill="#ffff00"/>
<text x="534" y="704" font-size="4.5" fill="#ffff00" text-anchor="middle" font-weight="bold" transform="rotate(-40 534 704)">ESCAPE DIST. 3m</text>
<text x="606" y="704" font-size="4.5" fill="#ffff00" text-anchor="middle" font-weight="bold" transform="rotate(33 606 704)">ESCAPE DIST. 3m</text>
<line x1="582" y1="693" x2="636" y2="724" stroke="#ff00ff" stroke-width="1.5" stroke-dasharray="5 4"/>
<line x1="546" y1="697" x2="520" y2="721" stroke="#ff00ff" stroke-width="1.2" stroke-dasharray="5 4"/>
<path d="M574 689 A32 32 0 0 1 542 721" stroke="#888" stroke-width="1" fill="none" />
<line x1="574.6" y1="692" x2="574.6" y2="721" stroke="#00ffff" stroke-width="1.5"/>
<path d="M508 730 q4-4 8 0 q4-4 8 0 q4-4 8 0 q4-4 8 0 q4-4 8 0 q4-4 8 0 q4-4 8 0 q4-4 8 0 q4-4 8 0 q4-4 8 0 q4-4 8 0 q4-4 8 0 q4-4 8 0 q4-4 8 0 q4-4 8 0 q4-4 8 0 q4-4 8 0" stroke="#0000ff" stroke-width="1" fill="none" />
<rect x="590" y="734" width="24" height="6" stroke="#ff0000" stroke-width="1.2" fill="none"/>
<rect x="590" y="743" width="30" height="6" stroke="#ff0000" stroke-width="1.2" fill="none"/>
<path d="M586 737 l4-3v6z M586 746 l4-3v6z" stroke="#ff0000" stroke-width="1" fill="#ff0000" />
<line x1="507" y1="751.5" x2="644" y2="751.5" stroke="#00ffff" stroke-width="1.2"/>
<rect x="506" y="753" width="140" height="17" stroke="#ff00ff" stroke-width="1" fill="none"/>
<rect x="530" y="754" width="19" height="15" fill="#ee88ee"/><rect x="552" y="754" width="22" height="15" fill="#3a7a4a"/><rect x="605" y="754" width="17" height="15" fill="#3a7a4a"/>
<line x1="507" y1="754" x2="530" y2="769" stroke="#0000ff" stroke-width="0.9"/>
<line x1="530" y1="754" x2="507" y2="769" stroke="#0000ff" stroke-width="0.9"/>
<line x1="530" y1="754" x2="549" y2="769" stroke="#0000ff" stroke-width="0.9"/>
<line x1="549" y1="754" x2="530" y2="769" stroke="#0000ff" stroke-width="0.9"/>
<line x1="552" y1="754" x2="574" y2="769" stroke="#0000ff" stroke-width="0.9"/>
<line x1="574" y1="754" x2="552" y2="769" stroke="#0000ff" stroke-width="0.9"/>
<line x1="574" y1="754" x2="604" y2="769" stroke="#0000ff" stroke-width="0.9"/>
<line x1="604" y1="754" x2="574" y2="769" stroke="#0000ff" stroke-width="0.9"/>
<line x1="605" y1="754" x2="622" y2="769" stroke="#0000ff" stroke-width="0.9"/>
<line x1="622" y1="754" x2="605" y2="769" stroke="#0000ff" stroke-width="0.9"/>
<line x1="622" y1="754" x2="645" y2="769" stroke="#0000ff" stroke-width="0.9"/>
<line x1="645" y1="754" x2="622" y2="769" stroke="#0000ff" stroke-width="0.9"/>
<line x1="552" y1="754" x2="552" y2="769" stroke="#00ff00" stroke-width="1"/>
<line x1="574" y1="754" x2="574" y2="769" stroke="#00ff00" stroke-width="1"/>
<line x1="605" y1="754" x2="605" y2="769" stroke="#00ff00" stroke-width="1"/>
<line x1="622" y1="754" x2="622" y2="769" stroke="#00ff00" stroke-width="1"/>
<path d="M495 745 q-8 6 -2 14 q-8 8 2 14 q2 8 12 8 q6 7 14 2 q8 6 14 1 q8 6 16 0 q8 6 16 0 q8 6 16 0 q8 6 16 0 q8 6 16 0 q10 4 14-4 q10-2 8-12 q6-8 -2-14 q2-8 -6-10" stroke="#0000ff" stroke-width="1" fill="none" />
<rect x="531.5" y="779" width="9" height="180" fill="#9a9a9a" stroke="#7a7a7a" stroke-width="1.5"/>
<line x1="536" y1="782" x2="536" y2="955" stroke="#5a6ab0" stroke-width="2.5" stroke-dasharray="2 4"/>
<rect x="517" y="825" width="40" height="85" fill="#aaa" stroke="#888"/>
<rect x="520" y="828" width="13" height="26" fill="#fff" stroke="#3c3"/><rect x="540" y="828" width="14" height="26" fill="#fff" stroke="#3c3"/><rect x="520" y="857" width="34" height="20" fill="#fff"/><rect x="520" y="880" width="13" height="27" fill="#fff" stroke="#3c3"/><rect x="540" y="880" width="14" height="27" fill="#fff" stroke="#3c3"/>
<line x1="536" y1="828" x2="536" y2="907" stroke="#0000ff" stroke-width="2.5" stroke-dasharray="4 2"/>
<circle cx="526.5" cy="835" r="4.5" stroke="#0000ff" stroke-width="1.2" fill="none"/>
<line x1="522" y1="835" x2="531" y2="835" stroke="#0000ff" stroke-width="1"/>
<line x1="526.5" y1="830.5" x2="526.5" y2="839.5" stroke="#0000ff" stroke-width="1"/>
<circle cx="526.5" cy="847" r="4.5" stroke="#0000ff" stroke-width="1.2" fill="none"/>
<line x1="522" y1="847" x2="531" y2="847" stroke="#0000ff" stroke-width="1"/>
<line x1="526.5" y1="842.5" x2="526.5" y2="851.5" stroke="#0000ff" stroke-width="1"/>
<circle cx="547" cy="847" r="4.5" stroke="#0000ff" stroke-width="1.2" fill="none"/>
<line x1="542.5" y1="847" x2="551.5" y2="847" stroke="#0000ff" stroke-width="1"/>
<line x1="547" y1="842.5" x2="547" y2="851.5" stroke="#0000ff" stroke-width="1"/>
<circle cx="526.5" cy="867" r="4.5" stroke="#0000ff" stroke-width="1.2" fill="none"/>
<line x1="522" y1="867" x2="531" y2="867" stroke="#0000ff" stroke-width="1"/>
<line x1="526.5" y1="862.5" x2="526.5" y2="871.5" stroke="#0000ff" stroke-width="1"/>
<circle cx="547" cy="867" r="4.5" stroke="#0000ff" stroke-width="1.2" fill="none"/>
<line x1="542.5" y1="867" x2="551.5" y2="867" stroke="#0000ff" stroke-width="1"/>
<line x1="547" y1="862.5" x2="547" y2="871.5" stroke="#0000ff" stroke-width="1"/>
<circle cx="547" cy="888" r="4.5" stroke="#0000ff" stroke-width="1.2" fill="none"/>
<line x1="542.5" y1="888" x2="551.5" y2="888" stroke="#0000ff" stroke-width="1"/>
<line x1="547" y1="883.5" x2="547" y2="892.5" stroke="#0000ff" stroke-width="1"/>
<circle cx="526.5" cy="900" r="4.5" stroke="#0000ff" stroke-width="1.2" fill="none"/>
<line x1="522" y1="900" x2="531" y2="900" stroke="#0000ff" stroke-width="1"/>
<line x1="526.5" y1="895.5" x2="526.5" y2="904.5" stroke="#0000ff" stroke-width="1"/>
<circle cx="535.5" cy="959.5" r="7" stroke="#ff0000" stroke-width="1.8" fill="none"/>
<rect x="592.5" y="542.5" width="62.5" height="55" stroke="#ff0000" stroke-width="1" fill="none"/>
<rect x="592.5" y="542.5" width="19.5" height="55" stroke="#ff0000" stroke-width="1" fill="none"/>
<path d="M600 546 h12 l-8 8" stroke="#ff0000" stroke-width="1" fill="none" />
<rect x="594" y="525" width="13.5" height="17.5" stroke="#ff0000" stroke-width="1" fill="none"/>
<rect x="594" y="597.5" width="13.5" height="17.5" stroke="#ff0000" stroke-width="1" fill="none"/>
<line x1="592" y1="570" x2="660" y2="570" stroke="#222" stroke-width="1.3" stroke-dasharray="4 3"/>
<text x="617" y="566" font-size="5.52" fill="#ffff00" text-anchor="start" font-weight="bold" stroke="#ffff00" stroke-width="0.35" textLength="26.5" lengthAdjust="spacingAndGlyphs">BEDROOM 1</text>
<rect x="606" y="576" width="51.5" height="18" stroke="#ff0000" stroke-width="1" fill="none" rx="9"/>
<text x="631" y="586" font-size="6" fill="#ffff00" text-anchor="middle" >STAIR</text>
<text x="631" y="592" font-size="4" fill="#ffff00" text-anchor="middle" >KSR-SJP-C800</text>
<text x="662" y="578" font-size="3.4" fill="#ff0000" text-anchor="start" font-weight="bold" >18.0sqm</text>
<line x1="590" y1="610" x2="600" y2="610" stroke="#222" stroke-width="1.2" stroke-dasharray="4 3"/>
<line x1="590" y1="540" x2="600" y2="540" stroke="#222" stroke-width="1.2" stroke-dasharray="4 3"/>
<path d="M651.0 620.0 L651.0 690.0" stroke="#8a8a8a" stroke-width="4.5" fill="none"/>
<path d="M651.0 620.0 L651.0 690.0" stroke="#ffff66" stroke-width="2" fill="none"/>
<rect x="652.7" y="626" width="19.8" height="18" stroke="#ff0000" stroke-width="1" fill="none"/>
<path d="M662.6 630 l3.5 5 l-3.5 5 l-3.5-5z" stroke="#ff0000" stroke-width="1" fill="#ff0000" />
<rect x="652.7" y="663" width="19.8" height="18" stroke="#ff0000" stroke-width="1" fill="none"/>
<line x1="652.7" y1="663" x2="672.5" y2="681" stroke="#ff0000" stroke-width="1"/>
<line x1="672.5" y1="663" x2="652.7" y2="681" stroke="#ff0000" stroke-width="1"/>
<rect x="652.7" y="645" width="19.8" height="18" stroke="#ff0000" stroke-width="1" fill="none"/>
<path d="M674.0 690.0 L674.0 620.0" stroke="#8a8a8a" stroke-width="4.5" fill="none"/>
<path d="M674.0 690.0 L674.0 620.0" stroke="#ffff66" stroke-width="2" fill="none"/>
<path d="M746.0 516.0 L746.0 623.0" stroke="#8a8a8a" stroke-width="5.5" fill="none"/>
<path d="M746.0 516.0 L746.0 623.0" stroke="#ffff66" stroke-width="3" fill="none"/>
<rect x="742" y="569" width="9" height="51" stroke="#8a8a8a" stroke-width="1" fill="url(#dots)"/>
<line x1="743" y1="570" x2="743" y2="619" stroke="#ff00ff" stroke-width="0.8"/>
<line x1="736" y1="565" x2="736" y2="640" stroke="#aaa" stroke-width="1.2"/>
<rect x="752" y="534.5" width="10" height="29" stroke="#ff0000" stroke-width="1" fill="none"/>
<ellipse cx="772" cy="549" rx="8" ry="6.5" stroke="#f00" fill="none"/>
<circle cx="772" cy="549" r="3" stroke="#ff0000" stroke-width="1" fill="none"/>
<rect x="752" y="570" width="20" height="26.7" stroke="#ff0000" stroke-width="1" fill="none"/>
<rect x="755" y="573" width="13" height="18" stroke="#aaa" stroke-width="1" fill="none"/>
<circle cx="761" cy="581" r="1" stroke="#ff0000" stroke-width="1" fill="none"/>
<path d="M750.0 566.0 L772.0 566.0" stroke="#8a8a8a" stroke-width="4.5" fill="none"/>
<path d="M750.0 566.0 L772.0 566.0" stroke="#ffff66" stroke-width="2" fill="none"/>
<rect x="753.7" y="596.7" width="55.3" height="25" stroke="#ff0000" stroke-width="1" fill="none" rx="12"/>
<ellipse cx="781" cy="609" rx="17" ry="6.5" stroke="#aaa" fill="none"/>
<text x="779" y="568" font-size="5.04" fill="#ffff00" text-anchor="start" font-weight="bold" stroke="#ffff00" stroke-width="0.35" textLength="26.9" lengthAdjust="spacingAndGlyphs">BATHROOM 3</text>
<text x="779" y="574" font-size="5.04" fill="#ffff00" text-anchor="start" font-weight="bold" stroke="#ffff00" stroke-width="0.35" textLength="18.8" lengthAdjust="spacingAndGlyphs">TYPE 1B</text>
<text x="787" y="590" font-size="3.4" fill="#ff0000" text-anchor="middle" font-weight="bold" >9.3sqm</text>
<path d="M812.5 583.0 L812.5 625.7" stroke="#8a8a8a" stroke-width="4.5" fill="none"/>
<path d="M812.5 583.0 L812.5 625.7" stroke="#ffff66" stroke-width="2" fill="none"/>
<path d="M748.0 623.0 L814.0 623.0" stroke="#8a8a8a" stroke-width="5.5" fill="none"/>
<path d="M748.0 623.0 L814.0 623.0" stroke="#ffff66" stroke-width="3" fill="none"/>
<path d="M826 544 A28 28 0 0 0 812 580" stroke="#888" stroke-width="1" fill="none" />
<line x1="812" y1="580" x2="826" y2="553" stroke="#0000ff" stroke-width="1.3"/>
<line x1="803" y1="550" x2="826" y2="540" stroke="#00ffff" stroke-width="1.5"/>
<rect x="805" y="541" width="20" height="5" stroke="#ff0000" stroke-width="1" fill="none"/>
<path d="M685.0 617.8 A30 30 0 0 1 715.0 587.8" stroke="#888" stroke-width="1" fill="none" />
<line x1="715" y1="617.8" x2="685" y2="617.8" stroke="#00ffff" stroke-width="1.5"/>
<line x1="714.5" y1="587" x2="714.5" y2="618" stroke="#00ffff" stroke-width="1.5"/>
<circle cx="700.8" cy="612.5" r="6" stroke="#ffaa00" stroke-width="0" fill="#ffaa00"/>
<path d="M650.0 622.0 L745.0 622.0" stroke="#8a8a8a" stroke-width="5.5" fill="none"/>
<path d="M650.0 622.0 L745.0 622.0" stroke="#ffff66" stroke-width="3" fill="none"/>
<path d="M678.3 621.8 L733.8 621.8 L733.8 738 L822.4 738 L822.4 769.8 L776 769.8 L771 766 L740.5 766 L735 769.8 L678.3 769.8 L678.3 747 L654.5 747 L654.5 691.8 L678.3 691.8 L678.3 621.8" stroke="#ff4a14" stroke-width="4.5" fill="none" stroke-dasharray="4.5 3"/>
<text x="685" y="661" font-size="5.76" fill="#ffff00" text-anchor="start" font-weight="bold" stroke="#ffff00" stroke-width="0.35" textLength="39.9" lengthAdjust="spacingAndGlyphs">ENTRANCE HALL</text>
<path d="M648 718 L665 718 L743 752.6 L825 752.6" stroke="#1a1a1a" stroke-width="2.4" fill="none" stroke-dasharray="8 5"/>
<text x="700" y="735" font-size="5" fill="#ffff00" text-anchor="middle" font-weight="bold" transform="rotate(23 700 735)">TRAVEL DIST. 5.9m</text>
<circle cx="831.6" cy="752.6" r="6" stroke="#ffaa00" stroke-width="0" fill="#ffaa00"/>
<path d="M851.0 740.0 A26 26 0 0 1 825.0 766.0" stroke="#888" stroke-width="1" fill="none" />
<line x1="825" y1="740" x2="851" y2="740" stroke="#00ffff" stroke-width="1.5"/>
<line x1="825" y1="740" x2="825" y2="766" stroke="#0000ff" stroke-width="1.3"/>
<path d="M765.5 633.7 A26 26 0 0 1 739.5 659.7" stroke="#888" stroke-width="1" fill="none" />
<line x1="739.5" y1="633.7" x2="765.5" y2="633.7" stroke="#00ffff" stroke-width="1.5"/>
<circle cx="745.7" cy="646.4" r="6" stroke="#ffaa00" stroke-width="0" fill="#ffaa00"/>
<line x1="739" y1="666.7" x2="810" y2="666.7" stroke="#ff0000" stroke-width="1"/>
<line x1="810" y1="666.7" x2="810" y2="687" stroke="#ff0000" stroke-width="1"/>
<path d="M738.0 687.0 L825.0 687.0" stroke="#8a8a8a" stroke-width="5.5" fill="none"/>
<path d="M738.0 687.0 L825.0 687.0" stroke="#ffff66" stroke-width="3" fill="none"/>
<path d="M739.0 623.0 L739.0 734.0" stroke="#8a8a8a" stroke-width="5.5" fill="none"/>
<path d="M739.0 623.0 L739.0 734.0" stroke="#ffff66" stroke-width="3" fill="none"/>
<rect x="831.6" y="621.8" width="47.4" height="67.2" stroke="#ff0000" stroke-width="1" fill="none"/>
<line x1="831.6" y1="661.4" x2="879" y2="661.4" stroke="#ff0000" stroke-width="1"/>
<rect x="836" y="668" width="18" height="16" stroke="#ff0000" stroke-width="1" fill="none"/>
<rect x="856" y="668" width="18" height="16" stroke="#ff0000" stroke-width="1" fill="none"/>
<rect x="818" y="672" width="13.6" height="12.4" stroke="#ff0000" stroke-width="1" fill="none"/>
<rect x="879" y="672" width="13.6" height="12.4" stroke="#ff0000" stroke-width="1" fill="none"/>
<text x="838" y="643" font-size="5.52" fill="#ffff00" text-anchor="start" font-weight="bold" stroke="#ffff00" stroke-width="0.35" textLength="26.5" lengthAdjust="spacingAndGlyphs">BEDROOM 3</text>
<text x="851" y="655" font-size="3.4" fill="#ff0000" text-anchor="middle" font-weight="bold" >18.0sqm</text>
<line x1="854.6" y1="615" x2="854.6" y2="760" stroke="#222" stroke-width="1.2" stroke-dasharray="4 3"/>
<line x1="813" y1="635" x2="813" y2="690" stroke="#222" stroke-width="1.2" stroke-dasharray="4 3"/>
<line x1="896" y1="635" x2="896" y2="750" stroke="#222" stroke-width="1.2" stroke-dasharray="4 3"/>
<line x1="926" y1="680" x2="926" y2="750" stroke="#222" stroke-width="1.2" stroke-dasharray="4 3"/>
<line x1="820" y1="689" x2="940" y2="689" stroke="#444" stroke-width="1.2" stroke-dasharray="4 3"/>
<rect x="873" y="700" width="48" height="52" stroke="#ff0000" stroke-width="1" fill="none"/>
<line x1="873" y1="712" x2="921" y2="712" stroke="#ff0000" stroke-width="1"/>
<rect x="879" y="690" width="18" height="16" stroke="#ff0000" stroke-width="1" fill="none"/>
<rect x="899" y="690" width="18" height="16" stroke="#ff0000" stroke-width="1" fill="none"/>
<rect x="858" y="688" width="13" height="14" stroke="#ff0000" stroke-width="1" fill="none"/>
<rect x="923" y="688" width="13" height="14" stroke="#ff0000" stroke-width="1" fill="none"/>
<text x="880" y="739" font-size="5.52" fill="#ffff00" text-anchor="start" font-weight="bold" stroke="#ffff00" stroke-width="0.35" textLength="26.5" lengthAdjust="spacingAndGlyphs">BEDROOM 2</text>
<text x="897" y="749" font-size="3.4" fill="#ff0000" text-anchor="middle" font-weight="bold" >11.2sqm</text>
<path d="M940.0 705.0 L963.0 705.0" stroke="#8a8a8a" stroke-width="4.5" fill="none"/>
<path d="M940.0 705.0 L963.0 705.0" stroke="#ffff66" stroke-width="2" fill="none"/>
<rect x="958" y="703" width="8" height="14" stroke="#8a8a8a" stroke-width="1" fill="none"/>
<rect x="770.8" y="705" width="23.8" height="26.5" fill="#d0d0d0" stroke="#999"/>
<text x="772" y="712" font-size="4.8" fill="#ffff00" text-anchor="start" font-weight="bold" stroke="#ffff00" stroke-width="0.35" textLength="30.7" lengthAdjust="spacingAndGlyphs">GUEST TOILET</text>
<text x="772" y="718" font-size="4.8" fill="#e8e860" text-anchor="start" font-weight="bold" stroke="#e8e860" stroke-width="0.35" textLength="17.9" lengthAdjust="spacingAndGlyphs">TYPE 2A</text>
<circle cx="782" cy="728" r="5" stroke="#f0c080" stroke-width="0" fill="#f0c080"/>
<ellipse cx="800" cy="717" rx="8" ry="6" stroke="#f00" fill="none"/>
<circle cx="800" cy="717" r="2.5" stroke="#ff0000" stroke-width="1" fill="none"/>
<rect x="774" y="691" width="16" height="12" stroke="#ff0000" stroke-width="1" fill="none"/>
<circle cx="782" cy="697" r="3" stroke="#ff0000" stroke-width="1" fill="none"/>
<rect x="812" y="690.5" width="10.4" height="41" stroke="#ff0000" stroke-width="1" fill="none"/>
<rect x="812" y="725" width="10.4" height="6" stroke="#ff0000" stroke-width="1" fill="#ff0000"/>
<path d="M825.0 689.0 L825.0 735.0" stroke="#8a8a8a" stroke-width="4.5" fill="none"/>
<path d="M825.0 689.0 L825.0 735.0" stroke="#ffff66" stroke-width="2" fill="none"/>
<path d="M739.0 733.5 L846.0 733.5" stroke="#8a8a8a" stroke-width="4.5" fill="none"/>
<path d="M739.0 733.5 L846.0 733.5" stroke="#ffff66" stroke-width="2" fill="none"/>
<path d="M770.0 761.0 A26 26 0 0 1 744.0 735.0" stroke="#888" stroke-width="1" fill="none" />
<line x1="770" y1="735" x2="770" y2="761" stroke="#00ffff" stroke-width="1.5"/>
<line x1="768" y1="735" x2="768" y2="770" stroke="#00ffff" stroke-width="1.5"/>
<path d="M650.0 775.0 L975.0 775.0" stroke="#8a8a8a" stroke-width="5.5" fill="none"/>
<path d="M650.0 775.0 L975.0 775.0" stroke="#ffff66" stroke-width="3" fill="none"/>
<rect x="741.8" y="770" width="33" height="8" stroke="#8a8a8a" stroke-width="1" fill="url(#dots)"/>
<line x1="742" y1="776" x2="775" y2="776" stroke="#ff00ff" stroke-width="0.8"/>
<path d="M259 845 L259 890 L271 890 L271 945.5 L301 945.5 L301 941 L312 941" stroke="#00ff00" stroke-width="1.2" fill="none"/>
<path d="M262 848 L262 887 L274 887 L274 942.5 L298 942.5" stroke="#00ff00" stroke-width="0.8" fill="none"/>
<path d="M277.0 924.0 L277.0 931.0 L312.0 931.0" stroke="#8a8a8a" stroke-width="7" fill="none"/>
<path d="M277.0 924.0 L277.0 931.0 L312.0 931.0" stroke="url(#dots)" stroke-width="5" fill="none"/>
<line x1="276" y1="930.7" x2="312" y2="930.7" stroke="#ff00ff" stroke-width="1"/>
<path d="M283 924 L312 924 L312 935" stroke="#8a8a8a" stroke-width="1.5" fill="none"/>
<line x1="260" y1="790.6" x2="283" y2="790.6" stroke="#ff0000" stroke-width="1"/>
<line x1="260" y1="886" x2="283" y2="886" stroke="#ff0000" stroke-width="1"/>
<line x1="260" y1="935" x2="275" y2="935" stroke="#ff0000" stroke-width="1"/>
<rect x="322" y="820" width="28" height="55.3" stroke="#ff0000" stroke-width="1" fill="none"/>
<circle cx="312.5" cy="828.6" r="7" stroke="#ff0000" stroke-width="1" fill="none"/>
<circle cx="357.5" cy="828.6" r="7" stroke="#ff0000" stroke-width="1" fill="none"/>
<circle cx="312.5" cy="848" r="7" stroke="#ff0000" stroke-width="1" fill="none"/>
<circle cx="357.5" cy="848" r="7" stroke="#ff0000" stroke-width="1" fill="none"/>
<circle cx="312.5" cy="865.6" r="7" stroke="#ff0000" stroke-width="1" fill="none"/>
<circle cx="357.5" cy="865.6" r="7" stroke="#ff0000" stroke-width="1" fill="none"/>
<circle cx="336" cy="811" r="7" stroke="#ff0000" stroke-width="1" fill="none"/>
<circle cx="336" cy="886" r="7" stroke="#ff0000" stroke-width="1" fill="none"/>
<text x="327" y="839" font-size="5.76" fill="#ffff00" text-anchor="start" font-weight="bold" stroke="#ffff00" stroke-width="0.35" textLength="18.4" lengthAdjust="spacingAndGlyphs">DINING</text>
<text x="336" y="853" font-size="3.2" fill="#ff0000" text-anchor="middle" font-weight="bold" >7.2sqm</text>
<rect x="301.3" y="943.8" width="86.7" height="38" fill="none" stroke="#0000ff" stroke-width="1.3"/>
<line x1="304" y1="947" x2="385" y2="947" stroke="#999" stroke-width="1"/>
<line x1="304" y1="952" x2="385" y2="952" stroke="#999" stroke-width="1"/>
<line x1="304" y1="957" x2="385" y2="957" stroke="#999" stroke-width="1"/>
<line x1="304" y1="962" x2="385" y2="962" stroke="#999" stroke-width="1"/>
<line x1="304" y1="967" x2="385" y2="967" stroke="#999" stroke-width="1"/>
<line x1="304" y1="972" x2="385" y2="972" stroke="#999" stroke-width="1"/>
<line x1="304" y1="977" x2="385" y2="977" stroke="#999" stroke-width="1"/>
<rect x="312" y="935" width="66" height="4.4" stroke="#ff0000" stroke-width="1.2" fill="none"/>
<line x1="314" y1="937.2" x2="376" y2="937.2" stroke="#ff0000" stroke-width="1.2"/>
<path d="M305 947 L305 978 L383 978 L383 947" stroke="#ff0000" stroke-width="1.2" fill="none"/>
<line x1="305" y1="980" x2="383" y2="945" stroke="#0000ff" stroke-width="1.2"/>
<line x1="311" y1="943" x2="383" y2="950" stroke="#0000ff" stroke-width="1.2"/>
<path d="M322 975 A20 25 0 0 0 342 947 A20 25 0 0 0 362 975" stroke="#ff0000" stroke-width="1" fill="none" />
<text x="325" y="966" font-size="5.76" fill="#ffff00" text-anchor="start" font-weight="bold" stroke="#ffff00" stroke-width="0.35" textLength="21.5" lengthAdjust="spacingAndGlyphs">BALCONY</text>
<line x1="366" y1="951" x2="366" y2="966" stroke="#0000ff" stroke-width="1.2"/>
<line x1="366" y1="951" x2="363" y2="955" stroke="#0000ff" stroke-width="1"/>
<line x1="366" y1="951" x2="369" y2="955" stroke="#0000ff" stroke-width="1"/>
<path d="M377 935 L377 924 L399 924 L399 972" stroke="#8a8a8a" stroke-width="1.5" fill="none"/>
<rect x="392" y="940" width="7" height="30" stroke="#8a8a8a" stroke-width="1" fill="url(#dots)"/>
<path d="M378 940 L390 940 L390 979.7 L439 979.7" stroke="#00ff00" stroke-width="1.1" fill="none"/>
<path d="M305.6 982 L305.6 996 L320.8 996" stroke="#ff0000" stroke-width="1" fill="none"/>
<text x="322" y="997" font-size="4" fill="#ffff00" text-anchor="start" font-weight="bold" >+44.5sm</text>
<path d="M373 972 L373 998 L388 998" stroke="#ff0000" stroke-width="1" fill="none"/>
<text x="389" y="999" font-size="4" fill="#ffff00" text-anchor="start" font-weight="bold" >SEE DWG. for elevations</text>
<rect x="403.4" y="832" width="32.6" height="70.5" stroke="#ff0000" stroke-width="1" fill="none"/>
<line x1="412.5" y1="836" x2="412.5" y2="898.5" stroke="#ff0000" stroke-width="1"/>
<line x1="403.4" y1="836" x2="436" y2="836" stroke="#ff0000" stroke-width="1"/>
<line x1="403.4" y1="898.5" x2="436" y2="898.5" stroke="#ff0000" stroke-width="1"/>
<line x1="412.5" y1="856.8" x2="436" y2="856.8" stroke="#ff0000" stroke-width="1"/>
<line x1="412.5" y1="877.7" x2="436" y2="877.7" stroke="#ff0000" stroke-width="1"/>
<path d="M444 831 V828 A13 13 0 0 1 470 828 V831 H466 V828 A9 9 0 0 0 448 828 V831 Z" stroke="#ff0000" stroke-width="1" fill="none" />
<path d="M475.6 831 V828 A13 13 0 0 1 501.6 828 V831 H497.6 V828 A9 9 0 0 0 479.6 828 V831 Z" stroke="#ff0000" stroke-width="1" fill="none" />
<path d="M444 897 V900 A13 13 0 0 0 470 900 V897 H466 V900 A9 9 0 0 1 448 900 V897 Z" stroke="#ff0000" stroke-width="1" fill="none" />
<path d="M475.6 897 V900 A13 13 0 0 0 501.6 900 V897 H497.6 V900 A9 9 0 0 1 479.6 900 V897 Z" stroke="#ff0000" stroke-width="1" fill="none" />
<rect x="457.6" y="851.5" width="30.4" height="31.5" stroke="#ff0000" stroke-width="1" fill="none"/>
<line x1="472.8" y1="851.5" x2="472.8" y2="883" stroke="#ff0000" stroke-width="1"/>
<line x1="457.6" y1="867.2" x2="488" y2="867.2" stroke="#ff0000" stroke-width="1"/>
<text x="457.6" y="839" font-size="5.76" fill="#ffff00" text-anchor="start" font-weight="bold" stroke="#ffff00" stroke-width="0.35" textLength="27.6" lengthAdjust="spacingAndGlyphs">RECEPTION</text>
<line x1="400" y1="907" x2="400" y2="922" stroke="#0000ff" stroke-width="1.4" stroke-dasharray="3 2"/>
<path d="M399 961 L399 953.5 L434 955 L434 961" stroke="#8a8a8a" stroke-width="1.3" fill="none"/>
<line x1="438" y1="962" x2="497" y2="962" stroke="#ff0000" stroke-width="1"/>
<path d="M493.5 961 L493.5 957 L540 957" stroke="#8a8a8a" stroke-width="1.3" fill="none"/>
<rect x="399" y="965.5" width="39" height="4.5" stroke="#ff00ff" stroke-width="1" fill="url(#dots)"/>
<rect x="499" y="965.5" width="41" height="4.5" stroke="#ff00ff" stroke-width="1" fill="url(#dots)"/>
<path d="M438 977.4 L499 977.4 L499 973 L438 973 Z" stroke="#ff0000" stroke-width="1" fill="none"/>
<line x1="438" y1="975.8" x2="499" y2="975.8" stroke="#ff0000" stroke-width="1.1"/>
<line x1="438" y1="974.7" x2="499" y2="974.7" stroke="#ff0000" stroke-width="1.1"/>
<line x1="437" y1="978.5" x2="499" y2="978.5" stroke="#00ff00" stroke-width="1"/>
<line x1="434" y1="980.7" x2="501" y2="980.7" stroke="#ff0000" stroke-width="1"/>
<path d="M580.5 831 V828 A13 13 0 0 1 606.5 828 V831 H602.5 V828 A9 9 0 0 0 584.5 828 V831 Z" stroke="#ff0000" stroke-width="1" fill="none" />
<path d="M612 831 V828 A13 13 0 0 1 638 828 V831 H634 V828 A9 9 0 0 0 616 828 V831 Z" stroke="#ff0000" stroke-width="1" fill="none" />
<path d="M580.5 897 V900 A13 13 0 0 0 606.5 900 V897 H602.5 V900 A9 9 0 0 1 584.5 900 V897 Z" stroke="#ff0000" stroke-width="1" fill="none" />
<path d="M612 897 V900 A13 13 0 0 0 638 900 V897 H634 V900 A9 9 0 0 1 616 900 V897 Z" stroke="#ff0000" stroke-width="1" fill="none" />
<rect x="594" y="852.5" width="31.6" height="31.5" stroke="#ff0000" stroke-width="1" fill="none"/>
<line x1="609.8" y1="852.5" x2="609.8" y2="884" stroke="#ff0000" stroke-width="1"/>
<line x1="594" y1="868.2" x2="625.6" y2="868.2" stroke="#ff0000" stroke-width="1"/>
<text x="595" y="839" font-size="5.76" fill="#ffff00" text-anchor="start" font-weight="bold" stroke="#ffff00" stroke-width="0.35" textLength="27.6" lengthAdjust="spacingAndGlyphs">RECEPTION</text>
<rect x="657" y="833" width="32.6" height="69.5" stroke="#ff0000" stroke-width="1" fill="none"/>
<line x1="680.5" y1="837" x2="680.5" y2="898.5" stroke="#ff0000" stroke-width="1"/>
<line x1="657" y1="837" x2="689.6" y2="837" stroke="#ff0000" stroke-width="1"/>
<line x1="657" y1="898.5" x2="689.6" y2="898.5" stroke="#ff0000" stroke-width="1"/>
<line x1="657" y1="857.5" x2="680.5" y2="857.5" stroke="#ff0000" stroke-width="1"/>
<line x1="657" y1="878" x2="680.5" y2="878" stroke="#ff0000" stroke-width="1"/>
<path d="M550.6 963 L625.6 963" stroke="#ff0000" stroke-width="1" fill="none"/>
<path d="M625.6 961 L625.6 963 L634 963" stroke="#8a8a8a" stroke-width="1.3" fill="none"/>
<rect x="635" y="965.5" width="45" height="4.5" stroke="#ff00ff" stroke-width="1" fill="url(#dots)"/>
<path d="M542 977.4 L635 977.4 L635 973 L542 973 Z" stroke="#ff0000" stroke-width="1" fill="none"/>
<line x1="542" y1="975.8" x2="635" y2="975.8" stroke="#ff0000" stroke-width="1.1"/>
<line x1="542" y1="974.7" x2="635" y2="974.7" stroke="#ff0000" stroke-width="1.1"/>
<line x1="530" y1="978.5" x2="543" y2="978.5" stroke="#00ff00" stroke-width="1"/>
<line x1="634" y1="978.5" x2="652" y2="978.5" stroke="#00ff00" stroke-width="1"/>
<line x1="538.7" y1="980.7" x2="638.6" y2="980.7" stroke="#ff0000" stroke-width="1"/>
<path d="M684.0 802.0 A25 25 0 0 0 709.0 777.0" stroke="#888" stroke-width="1" fill="none" />
<line x1="684" y1="777" x2="684" y2="802" stroke="#00ffff" stroke-width="1.5"/>
<path d="M734.0 802.0 A25 25 0 0 1 709.0 777.0" stroke="#888" stroke-width="1" fill="none" />
<line x1="734" y1="777" x2="734" y2="802" stroke="#00ffff" stroke-width="1.5"/>
<circle cx="708" cy="780" r="6" stroke="#ffaa00" stroke-width="0" fill="#ffaa00"/>
<line x1="683.6" y1="777" x2="683.6" y2="802.6" stroke="#00ffff" stroke-width="1.8"/>
<line x1="734" y1="777" x2="734" y2="802.6" stroke="#00ffff" stroke-width="1.8"/>
<line x1="744" y1="802.6" x2="744" y2="913" stroke="#0000ff" stroke-width="1.3"/>
<rect x="784" y="778" width="18.7" height="19" stroke="#ff0000" stroke-width="1" fill="none"/>
<line x1="784" y1="778" x2="802.7" y2="797" stroke="#ff0000" stroke-width="1"/>
<line x1="802.7" y1="778" x2="784" y2="797" stroke="#ff0000" stroke-width="1"/>
<rect x="802.7" y="778" width="18.7" height="19" stroke="#ff0000" stroke-width="1" fill="none"/>
<line x1="802.7" y1="778" x2="821.4" y2="797" stroke="#ff0000" stroke-width="1"/>
<line x1="821.4" y1="778" x2="802.7" y2="797" stroke="#ff0000" stroke-width="1"/>
<rect x="821.3" y="778" width="18.7" height="19" stroke="#ff0000" stroke-width="1" fill="none"/>
<line x1="821.3" y1="778" x2="840" y2="797" stroke="#ff0000" stroke-width="1"/>
<line x1="840" y1="778" x2="821.3" y2="797" stroke="#ff0000" stroke-width="1"/>
<line x1="784" y1="802" x2="840" y2="802" stroke="#0000ff" stroke-width="1.2"/>
<path d="M746.7 778.0 L746.7 802.0" stroke="#8a8a8a" stroke-width="5.5" fill="none"/>
<path d="M746.7 778.0 L746.7 802.0" stroke="#ffff66" stroke-width="3" fill="none"/>
<path d="M778.5 778.0 L778.5 802.0" stroke="#8a8a8a" stroke-width="5.5" fill="none"/>
<path d="M778.5 778.0 L778.5 802.0" stroke="#ffff66" stroke-width="3" fill="none"/>
<path d="M843.0 778.0 L843.0 802.0" stroke="#8a8a8a" stroke-width="5.5" fill="none"/>
<path d="M843.0 778.0 L843.0 802.0" stroke="#ffff66" stroke-width="3" fill="none"/>
<line x1="750" y1="802" x2="774" y2="802" stroke="#00ffff" stroke-width="1.5"/>
<rect x="763" y="844.5" width="56" height="27.8" stroke="#ff0000" stroke-width="1" fill="none"/>
<circle cx="772" cy="838.5" r="6.5" stroke="#ff0000" stroke-width="1" fill="none"/>
<circle cx="772" cy="882" r="6.5" stroke="#ff0000" stroke-width="1" fill="none"/>
<circle cx="790" cy="838.5" r="6.5" stroke="#ff0000" stroke-width="1" fill="none"/>
<circle cx="790" cy="882" r="6.5" stroke="#ff0000" stroke-width="1" fill="none"/>
<circle cx="809" cy="838.5" r="6.5" stroke="#ff0000" stroke-width="1" fill="none"/>
<circle cx="809" cy="882" r="6.5" stroke="#ff0000" stroke-width="1" fill="none"/>
<circle cx="745.5" cy="857.5" r="6.5" stroke="#ff0000" stroke-width="1" fill="none"/>
<circle cx="827.5" cy="857.5" r="6.5" stroke="#ff0000" stroke-width="1" fill="none"/>
<text x="780" y="851" font-size="5.76" fill="#ffff00" text-anchor="start" font-weight="bold" stroke="#ffff00" stroke-width="0.35" textLength="18.4" lengthAdjust="spacingAndGlyphs">DINING</text>
<rect x="858.3" y="829" width="9.7" height="64" stroke="#ff0000" stroke-width="1" fill="none"/>
<path d="M865.5 829 L865.5 825.6 L889.7 825.6 L889.7 877.7 L898.7 892" stroke="#ff0000" stroke-width="1" fill="none"/>
<rect x="870" y="834.6" width="17" height="29.4" fill="#fff" stroke="#f00" stroke-width="1.2"/>
<line x1="870" y1="837.9" x2="887" y2="837.9" stroke="#ff0000" stroke-width="1"/>
<line x1="870" y1="841.2" x2="887" y2="841.2" stroke="#ff0000" stroke-width="1"/>
<line x1="870" y1="844.5" x2="887" y2="844.5" stroke="#ff0000" stroke-width="1"/>
<line x1="870" y1="847.8" x2="887" y2="847.8" stroke="#ff0000" stroke-width="1"/>
<line x1="870" y1="851.1" x2="887" y2="851.1" stroke="#ff0000" stroke-width="1"/>
<line x1="870" y1="854.4" x2="887" y2="854.4" stroke="#ff0000" stroke-width="1"/>
<line x1="870" y1="857.7" x2="887" y2="857.7" stroke="#ff0000" stroke-width="1"/>
<line x1="870" y1="861" x2="887" y2="861" stroke="#ff0000" stroke-width="1"/>
<line x1="874.2" y1="834.6" x2="874.2" y2="864" stroke="#ff0000" stroke-width="1"/>
<line x1="878.5" y1="834.6" x2="878.5" y2="864" stroke="#ff0000" stroke-width="1"/>
<line x1="882.8" y1="834.6" x2="882.8" y2="864" stroke="#ff0000" stroke-width="1"/>
<line x1="866.3" y1="893" x2="866.3" y2="910" stroke="#ff0000" stroke-width="1"/>
<text x="898" y="840" font-size="5.76" fill="#ffff00" text-anchor="start" font-weight="bold" stroke="#ffff00" stroke-width="0.35" textLength="21.5" lengthAdjust="spacingAndGlyphs">KITCHEN</text>
<text x="910" y="854" font-size="3.2" fill="#ff0000" text-anchor="middle" font-weight="bold" >7.1sqm</text>
<rect x="901" y="780.8" width="25.5" height="13.4" stroke="#ff0000" stroke-width="1.2" fill="none"/>
<line x1="916" y1="781" x2="916" y2="794" stroke="#ff0000" stroke-width="1"/>
<path d="M908 785 l2.5 2.5 l-2.5 2.5 l-2.5-2.5z" stroke="#ff0000" stroke-width="1" fill="#ff0000" />
<path d="M921 785 l2 2.5 l-2 2.5 l-2-2.5z" stroke="#ff0000" stroke-width="1" fill="#ff0000" />
<text x="806" y="908" font-size="4.5" fill="#00ffff" text-anchor="middle" font-weight="bold" >← SLIDING DOORS →</text>
<path d="M862 912 L862 904 L882 904 L894 896 L900 901 L886 911 L862 912 Z" stroke="#ff00ff" stroke-width="0.9" fill="url(#dots)"/>
<path d="M962.0 780.0 L955.0 808.0" stroke="#8a8a8a" stroke-width="7" fill="none"/>
<path d="M962.0 780.0 L955.0 808.0" stroke="url(#dots)" stroke-width="5" fill="none"/>
<path d="M958.1 779 L951.1 807" stroke="#ff00ff" stroke-width="1" fill="none"/>
<rect x="737" y="913.5" width="131" height="3" fill="#bbb"/>
<rect x="737" y="913.5" width="6" height="50" stroke="#999" stroke-width="1" fill="#ffffaa"/>
<line x1="745" y1="919" x2="860" y2="919" stroke="#999" stroke-width="1"/>
<line x1="745" y1="924" x2="860" y2="924" stroke="#999" stroke-width="1"/>
<line x1="745" y1="930" x2="860" y2="930" stroke="#999" stroke-width="1"/>
<line x1="745" y1="936" x2="860" y2="936" stroke="#999" stroke-width="1"/>
<line x1="745" y1="942" x2="860" y2="942" stroke="#999" stroke-width="1"/>
<line x1="745" y1="948.5" x2="860" y2="948.5" stroke="#999" stroke-width="1"/>
<line x1="745" y1="955" x2="860" y2="955" stroke="#999" stroke-width="1"/>
<line x1="745" y1="913.5" x2="868" y2="913.5" stroke="#ff0000" stroke-width="1.2"/>
<line x1="745" y1="917" x2="868" y2="917" stroke="#ff0000" stroke-width="1.2"/>
<path d="M744 964 Q810 940 868 926" stroke="#ff0000" stroke-width="1.2" fill="none" />
<path d="M744 968 Q812 944 870 930" stroke="#ff0000" stroke-width="1.2" fill="none" />
<path d="M755 964 Q820 945 870 931" stroke="#0000ff" stroke-width="1.2" fill="none" />
<line x1="751.5" y1="920.7" x2="868" y2="928" stroke="#0000ff" stroke-width="1.2"/>
<line x1="741" y1="915" x2="741" y2="960" stroke="#ff0000" stroke-width="2"/>
<rect x="779" y="929.7" width="24.6" height="4.3" fill="#ffff00"/>
<path d="M866 932 L908 903" stroke="#00ff00" stroke-width="1.2" fill="none" />
<path d="M868 935 L910 906" stroke="#00ff00" stroke-width="1.2" fill="none" />
<path d="M866.4 931.5 L866.4 942 L880.7 942" stroke="#ff0000" stroke-width="1" fill="none"/>
<text x="884" y="943" font-size="4" fill="#ffff00" text-anchor="start" font-weight="bold" >+44.5sm</text>
<line x1="762" y1="937" x2="770" y2="948" stroke="#0000ff" stroke-width="1.2"/>
<line x1="762" y1="937" x2="762" y2="941" stroke="#0000ff" stroke-width="1"/>
<rect x="1295" y="292.8" width="115.4" height="402.2" stroke="#ff0000" stroke-width="1.3" fill="none"/>
<text x="1302" y="311" font-size="5" fill="#ffff00" text-anchor="start" >KEY</text>
<rect x="1302" y="316" width="8.6" height="8.4" fill="#f4b080" stroke="#ffff66" stroke-width="1"/>
<rect x="1302" y="332" width="8.6" height="8.4" fill="#ffff00" stroke="#ffff66" stroke-width="1"/>
<rect x="1302" y="347" width="8.6" height="8.4" fill="#444444" stroke="#ffff66" stroke-width="1"/>
<rect x="1302" y="362" width="8.6" height="8.4" fill="#0c1a1e" stroke="#ffff66" stroke-width="1"/>
<rect x="1302" y="376.7" width="8.6" height="8.4" fill="#100808" stroke="#ffff66" stroke-width="1"/>
<rect x="1302" y="392" width="8.6" height="8.4" fill="#5a5a5a" stroke="#ffff66" stroke-width="1"/>
<rect x="1302" y="409.4" width="8.6" height="8.4" fill="#e080e0" stroke="#ffff66" stroke-width="1"/>
<rect x="1302" y="424.5" width="8.6" height="8.4" fill="#3a7a4a" stroke="#ffff66" stroke-width="1"/>
<text x="1318" y="320" font-size="3.9" fill="#ffff00" text-anchor="start" font-weight="bold" stroke="#ff0" stroke-width="0.3" textLength="42" lengthAdjust="spacingAndGlyphs">FIRE FIGHTING LIFT</text>
<text x="1318" y="336" font-size="3.9" fill="#ffff00" text-anchor="start" font-weight="bold" stroke="#ff0" stroke-width="0.3" textLength="32" lengthAdjust="spacingAndGlyphs">PASSENGER LIFT</text>
<text x="1318" y="350" font-size="3.9" fill="#ffff00" text-anchor="start" font-weight="bold" stroke="#ff0" stroke-width="0.3" textLength="58" lengthAdjust="spacingAndGlyphs">LOBBY WITH SMOKE DILUTION</text>
<text x="1318" y="354.5" font-size="3.9" fill="#ffff00" text-anchor="start" font-weight="bold" stroke="#ff0" stroke-width="0.3" textLength="14" lengthAdjust="spacingAndGlyphs">SYSTEM</text>
<text x="1318" y="365" font-size="3.9" fill="#ffff00" text-anchor="start" font-weight="bold" stroke="#ff0" stroke-width="0.3" textLength="70" lengthAdjust="spacingAndGlyphs">FIRE FIGHTING LOBBY WITH SMOKE</text>
<text x="1318" y="369.5" font-size="3.9" fill="#ffff00" text-anchor="start" font-weight="bold" stroke="#ff0" stroke-width="0.3" textLength="35" lengthAdjust="spacingAndGlyphs">DILUTION SYSTEM</text>
<text x="1318" y="382" font-size="3.9" fill="#ffff00" text-anchor="start" font-weight="bold" stroke="#ff0" stroke-width="0.3" textLength="68" lengthAdjust="spacingAndGlyphs">MECHANICALLY VENTILATED LOBBY</text>
<text x="1318" y="397" font-size="3.9" fill="#ffff00" text-anchor="start" font-weight="bold" stroke="#ff0" stroke-width="0.3" textLength="79" lengthAdjust="spacingAndGlyphs">PROTECTED STAIRWAY OR ESCAPE ROUTE</text>
<text x="1318" y="414.5" font-size="3.9" fill="#ffff00" text-anchor="start" font-weight="bold" stroke="#ff0" stroke-width="0.3" textLength="21" lengthAdjust="spacingAndGlyphs">DRY RISER</text>
<text x="1318" y="429.5" font-size="3.9" fill="#ffff00" text-anchor="start" font-weight="bold" stroke="#ff0" stroke-width="0.3" textLength="23" lengthAdjust="spacingAndGlyphs">SMOKE VENT</text>
<line x1="1295.5" y1="442.5" x2="1311" y2="442.5" stroke="#ff0000" stroke-width="2.5" stroke-dasharray="5 1.5"/>
<line x1="1295.5" y1="454.8" x2="1311" y2="454.8" stroke="#00ff00" stroke-width="2.5" stroke-dasharray="5 1.5"/>
<line x1="1295.5" y1="467" x2="1311" y2="467" stroke="#0000ff" stroke-width="2.5" stroke-dasharray="5 1.5"/>
<text x="1318" y="444" font-size="3.9" fill="#ffff00" text-anchor="start" font-weight="bold" stroke="#ff0" stroke-width="0.3" textLength="82" lengthAdjust="spacingAndGlyphs">120MINS FIRE RESISTING CONSTRUCTION</text>
<text x="1318" y="456" font-size="3.9" fill="#ffff00" text-anchor="start" font-weight="bold" stroke="#ff0" stroke-width="0.3" textLength="79" lengthAdjust="spacingAndGlyphs">60MINS FIRE RESISTING CONSTRUCTION</text>
<text x="1318" y="468" font-size="3.9" fill="#ffff00" text-anchor="start" font-weight="bold" stroke="#ff0" stroke-width="0.3" textLength="79" lengthAdjust="spacingAndGlyphs">30MINS FIRE RESISTING CONSTRUCTION</text>
<circle cx="1306.7" cy="481.6" r="4" stroke="#ffaa00" stroke-width="0" fill="#ffaa00"/>
<text x="1318" y="483.1" font-size="3.4" fill="#ffff00" text-anchor="start" font-weight="bold" textLength="38" lengthAdjust="spacingAndGlyphs">FD30S FIRE DOOR</text>
<circle cx="1306.7" cy="493.5" r="4" stroke="#00ff00" stroke-width="0" fill="#00ff00"/>
<text x="1318" y="495" font-size="3.4" fill="#ffff00" text-anchor="start" font-weight="bold" textLength="38" lengthAdjust="spacingAndGlyphs">FD30S FIRE DOOR</text>
<circle cx="1306.7" cy="505.7" r="4" stroke="#ff4a14" stroke-width="0" fill="#ff4a14"/>
<text x="1318" y="507.2" font-size="3.4" fill="#ffff00" text-anchor="start" font-weight="bold" textLength="38" lengthAdjust="spacingAndGlyphs">FD30S FIRE DOOR</text>
<circle cx="1306.7" cy="517.6" r="4" stroke="#00ffff" stroke-width="0" fill="#00ffff"/>
<text x="1318" y="519.1" font-size="3.4" fill="#ffff00" text-anchor="start" font-weight="bold" textLength="38" lengthAdjust="spacingAndGlyphs">FD30S FIRE DOOR</text>
<circle cx="1306.7" cy="529" r="4" stroke="#ff00ff" stroke-width="0" fill="#ff00ff"/>
<text x="1318" y="530.5" font-size="3.4" fill="#ffff00" text-anchor="start" font-weight="bold" textLength="38" lengthAdjust="spacingAndGlyphs">FD30S FIRE DOOR</text>
<line x1="1295.5" y1="543" x2="1311.5" y2="543" stroke="#1a1a1a" stroke-width="1.5"/>
<text x="1318" y="544.5" font-size="3.6" fill="#ffff00" text-anchor="start" font-weight="bold" textLength="81" lengthAdjust="spacingAndGlyphs">EXTERNAL DISTANCE WITHIN APARTMENT</text>
<text x="1318" y="549.1" font-size="3.6" fill="#ffff00" text-anchor="start" font-weight="bold" textLength="81" lengthAdjust="spacingAndGlyphs">HALLWAY 9m MAXIMUM TRAVEL DISTANCE</text>
<line x1="1295.5" y1="555.4" x2="1311.5" y2="555.4" stroke="#ff00ff" stroke-width="1.5"/>
<text x="1318" y="557" font-size="3.6" fill="#ffff00" text-anchor="start" font-weight="bold" textLength="76" lengthAdjust="spacingAndGlyphs">EXTERNAL DISTANCE FROM APARTMENT</text>
<text x="1318" y="561.6" font-size="3.6" fill="#ffff00" text-anchor="start" font-weight="bold" textLength="79" lengthAdjust="spacingAndGlyphs">TO PROTECTED STAIR MAXIMUM TRAVEL</text>
<text x="1318" y="566.2" font-size="3.6" fill="#ffff00" text-anchor="start" font-weight="bold" textLength="62" lengthAdjust="spacingAndGlyphs">DISTANCE OF 3m ON ENTRANCE</text>
<text x="1318" y="570.8" font-size="3.6" fill="#ffff00" text-anchor="start" font-weight="bold" textLength="55" lengthAdjust="spacingAndGlyphs">LEVEL AND 7.5m ON OTHER</text>
<line x1="1295.5" y1="577" x2="1311.5" y2="577" stroke="#ff0000" stroke-width="1.5"/>
<text x="1318" y="579" font-size="3.6" fill="#ffff00" text-anchor="start" font-weight="bold" textLength="63" lengthAdjust="spacingAndGlyphs">TRAVEL DISTANCE IN BASEMENT</text>
<text x="1318" y="583.6" font-size="3.6" fill="#ffff00" text-anchor="start" font-weight="bold" textLength="63" lengthAdjust="spacingAndGlyphs">30m MAXIMUM DIRECT DISTANCE</text>
<text x="1318" y="588.2" font-size="3.6" fill="#ffff00" text-anchor="start" font-weight="bold" textLength="68" lengthAdjust="spacingAndGlyphs">45m MAXIMUM INDIRECT DISTANCE</text>
<text x="1318" y="592.8" font-size="3.6" fill="#ffff00" text-anchor="start" font-weight="bold" textLength="37" lengthAdjust="spacingAndGlyphs">FROM PLANT ROOMS</text>
<text x="1318" y="597.4" font-size="3.6" fill="#ffff00" text-anchor="start" font-weight="bold" textLength="63" lengthAdjust="spacingAndGlyphs">12m MAXIMUM DIRECT DISTANCE</text>
<text x="1318" y="602" font-size="3.6" fill="#ffff00" text-anchor="start" font-weight="bold" textLength="68" lengthAdjust="spacingAndGlyphs">18m MAXIMUM INDIRECT DISTANCE</text>
<circle cx="1306.7" cy="613" r="4" stroke="#ff0000" stroke-width="1.6" fill="none"/>
<text x="1318" y="614.5" font-size="3.6" fill="#ffff00" text-anchor="start" font-weight="bold" textLength="58" lengthAdjust="spacingAndGlyphs">VERTICAL CAVITY FIRE STOP</text>
<rect x="1302" y="621" width="9" height="5" fill="#00ffff"/><path d="M1302 627 h9 l-4.5 7 z" fill="#00ffff"/>
<text x="1318" y="630" font-size="3.6" fill="#ffff00" text-anchor="start" font-weight="bold" textLength="38" lengthAdjust="spacingAndGlyphs">MEANS OF ESCAPE</text>
<rect x="1302" y="639.5" width="9" height="5" fill="#00ffff"/><path d="M1302 645.5 h9 l-4.5 7 z" fill="#00ffff"/>
<text x="1318" y="647" font-size="3.6" fill="#ffff00" text-anchor="start" font-weight="bold" textLength="68" lengthAdjust="spacingAndGlyphs">ALTERNATIVE MEANS OF ESCAPE</text>
<text x="1302" y="661" font-size="3.6" fill="#ffff00" text-anchor="start" font-weight="bold" textLength="75" lengthAdjust="spacingAndGlyphs">NOTE: ESCAPE LIGHTING (CORRIDORS/</text>
<text x="1302" y="666" font-size="3.6" fill="#ffff00" text-anchor="start" font-weight="bold" textLength="73" lengthAdjust="spacingAndGlyphs">STAIRCASE) TO CONFORM TO BS 5266</text>
<text x="1302" y="671" font-size="3.6" fill="#ffff00" text-anchor="start" font-weight="bold" textLength="62" lengthAdjust="spacingAndGlyphs">EMERGENCY LIGHTING : PART 1</text>
</g>
<rect x="1850.5" y="188" width="11" height="4.5" fill="#e8e8e8" stroke="#333" stroke-width="1"/>
<rect x="1873" y="182.5" width="8.5" height="8.5" fill="#f4f4f4" stroke="#333" stroke-width="1"/>
<rect x="1870.5" y="185.5" width="8.5" height="8" fill="#f4f4f4" stroke="#333" stroke-width="1"/><rect x="1873" y="187.5" width="3.5" height="3.5" fill="#777" stroke="#333" stroke-width="0.8"/>
<path d="M1891 185l8 7M1899 185l-8 7" stroke="#333" stroke-width="3.4"/><path d="M1891 185l8 7M1899 185l-8 7" stroke="#f4f4f4" stroke-width="1.8"/>
<rect x="1875" y="432.5" width="33" height="133.5" rx="3.5" fill="#a0a0a0" stroke="#6c6c6c" stroke-width="1.6"/>
<path d="M1878 443.5h27M1878 480.5h27" stroke="#8e8e8e" stroke-dasharray="1 1.5"/><circle cx="1902" cy="438" r="3" fill="#b0b0b0" stroke="#8a8a8a"/><path d="M1900.5 436.5l3 3M1903.5 436.5l-3 3" stroke="#eee" stroke-width="0.8"/>
<g fill="none" stroke="#8c8c8c" stroke-width="1.4"><path d="M1886 471a9 9 0 1 1 9-9"/><circle cx="1888" cy="464" r="5"/><path d="M1896 490v-6a2 2 0 0 1 4 0v10M1892 492v-9a2 2 0 0 1 4 0M1888 493v-8a2 2 0 0 1 4 0M1888 495l-4-4a2 2 0 0 0-3 3l5 7c2 3 4 5 8 5s7-3 7-8v-8a2 2 0 0 0-4 0"/><path d="M1881 513l14 14M1895 513l-14 14M1881 513h4M1881 513v4M1895 513h-4M1895 513v4M1881 527h4M1881 527v-4"/><circle cx="1895" cy="527" r="5" fill="#a0a0a0"/><path d="M1899 531l4 4" stroke-width="2"/></g>
<text x="1892" y="474" font-size="8.5" font-weight="bold" fill="#8c8c8c">2D</text>
<path d="M1889.5 542h6l-3 3z" fill="#8c8c8c"/><circle cx="1902" cy="560" r="3.5" fill="#b0b0b0" stroke="#8a8a8a"/><path d="M1900 560h4" stroke="#888"/>
<g stroke="#2a3cf0" stroke-width="1.1" fill="none"><path d="M17.4 947.4V1032.5H67.6Z"/><path d="M17.4 1025.6h8.3v6.9"/><path d="M19.3 973l6.2 7 7-7.6M25.5 980v5.6"/><path d="M45.3 1019l12.5 12M57.8 1019l-12.5 12"/></g>
<rect x="646" y="950" width="235" height="15" rx="2" fill="#555" fill-opacity="0.74"/>
<rect x="646" y="970" width="641" height="30" rx="2" fill="#555" fill-opacity="0.74"/>
<rect x="646" y="1005" width="60" height="15" rx="2" fill="#555" fill-opacity="0.74"/>
<text x="648" y="961.5" font-family="Liberation Mono" font-size="11.7" fill="#f2f2f2" xml:space="preserve">**** System Variable Changed ****</text>
<text x="648" y="982" font-family="Liberation Mono" font-size="11.7" fill="#f2f2f2" xml:space="preserve">1 of the monitored system variables has changed from the preferred value. Use SYSVARMONITOR</text>
<text x="648" y="996.5" font-family="Liberation Mono" font-size="11.7" fill="#f2f2f2" xml:space="preserve">command to view changes.</text>
<text x="648" y="1016.5" font-family="Liberation Mono" font-size="11.7" fill="#f2f2f2" xml:space="preserve">Command:</text>
<rect x="584.5" y="1023.5" width="56" height="26" rx="2" fill="url(#gCmd)" stroke="#5a5a5a"/>
<path d="M589 1028v18M591 1028v18" stroke="#9a9a9a" stroke-dasharray="1.5 1.5"/>
<path d="M599 1032l8 8M607 1032l-8 8" stroke="#f4f4f4" stroke-width="1.8"/>
<path d="M620.5 1043.5l7-7" stroke="#f4f4f4" stroke-width="2.2" stroke-linecap="round"/><path d="M626 1038a4 4 0 0 1 5.5-6.5l-2.5 2.5 1 2 2 1 2.5-2.5a4 4 0 0 1-6.5 5.5z" fill="#f4f4f4"/>
<rect x="640.5" y="1023.5" width="695" height="26" rx="2" fill="#fff" fill-opacity="0.86" stroke="#a0a0a0"/>
<rect x="641" y="1045" width="694" height="4" fill="#e6e6e6"/>
<rect x="645.5" y="1030.5" width="15" height="11" fill="#fff" stroke="#555"/><path d="M647 1034l3 2-3 2M651 1039h4" stroke="#555" fill="none"/><path d="M663 1034h5l-2.5 3z" fill="#777"/>
<text x="676" y="1040" font-family="Liberation Mono" font-size="11.7" font-style="italic" fill="#aaa" xml:space="preserve">Type a command</text>
<path d="M1323 1039l5-5 5 5z" fill="#555"/>
<rect x="0" y="1050" width="1919" height="9" fill="#3a3a3a"/>
<rect x="0" y="1057" width="1919" height="2" fill="#4a2418"/>
<path d="M8 1059q4-8 10-8h46q6 0 8 8z" fill="#5a5a5a"/><path d="M68 1059q3-8 8-8h24q5 0 7 8z" fill="#424242"/><path d="M108 1059q3-8 8-8h13q4 0 5 8z" fill="#555"/>
<text x="23" y="1063" font-size="12" fill="#c8c8c8">Model</text><text x="80" y="1063" font-size="12" font-weight="bold" fill="#fff">D3</text><rect x="122" y="1055" width="2" height="4" fill="#ccc"/>
<rect x="1437.5" y="1051.5" width="41" height="8" fill="#444" stroke="#666"/>
<rect x="1480.5" y="1051.5" width="102" height="8" fill="#444" stroke="#666"/>
<rect x="1583.5" y="1051.5" width="63" height="8" fill="#444" stroke="#666"/>
<rect x="1648.5" y="1051.5" width="73" height="8" fill="#444" stroke="#666"/>
<rect x="1724.5" y="1051.5" width="64" height="8" fill="#444" stroke="#666"/>
<rect x="1790.5" y="1051.5" width="25" height="8" fill="#444" stroke="#666"/>
<rect x="1817.5" y="1051.5" width="50" height="8" fill="#444" stroke="#666"/>
<rect x="1870.5" y="1051.5" width="49" height="8" fill="#444" stroke="#666"/>
<rect x="1505" y="1052.5" width="22" height="5" fill="#6a8ec0"/><rect x="1584" y="1052.5" width="21" height="5" fill="#6a8ec0"/><rect x="1608" y="1052.5" width="22" height="5" fill="#6a8ec0"/><rect x="1612" y="1055.5" width="5" height="2" fill="#fff"/><rect x="1653" y="1055.5" width="16" height="2" fill="#ddd"/><rect x="1734" y="1055.5" width="4" height="2" fill="#ddd"/><rect x="1795" y="1055.5" width="2" height="2" fill="#ddd"/><rect x="1823" y="1055.5" width="8" height="2" fill="#ddd"/>
<rect x="0" y="0" width="1919" height="24" fill="#5f2116"/>
<rect x="40" y="0" width="263" height="24" fill="#ababab"/><rect x="40" y="23" width="263" height="1" fill="#959595"/>
<rect x="1310" y="0" width="447" height="23" fill="#ababab"/>
<path d="M50 6h11l5 5v7h-16z" fill="#f4f4f4"/><path d="M61 6v5h5" fill="#d0d0d0"/>
<path d="M74 8h6l2 2h7v2h-14zM74 12h16l-3 6h-15z" fill="#eeeeee"/><path d="M74 12h16l-3 6h-15z" fill="#dedede"/>
<path d="M98 4h16v16h-16z" fill="#dcdcdc"/><rect x="101" y="4" width="9" height="6" fill="#ffffff"/><rect x="102" y="15" width="9" height="5" fill="#ffffff"/><rect x="103" y="16.5" width="1" height="2" fill="#333"/>
<path d="M122 4h16v16h-16z" fill="#dcdcdc"/><rect x="125" y="4" width="9" height="6" fill="#ffffff"/><rect x="126" y="15" width="9" height="5" fill="#ffffff"/><rect x="127" y="16.5" width="1" height="2" fill="#333"/>
<path d="M130 18l6-7 2 2-6 7h-2z" fill="#f2c166"/><path d="M136 11l1.5-1.5 2 2-1.5 1.5z" fill="#e05050"/>
<rect x="147" y="5" width="10" height="15" rx="1" fill="#e8e8e8"/><rect x="149" y="7" width="6" height="10" fill="#555"/><path d="M153 13h4l1 1h4v6h-9z" fill="#f2c166"/>
<rect x="173" y="5" width="10" height="15" rx="1" fill="#e8e8e8"/><rect x="175" y="7" width="6" height="10" fill="#555"/><path d="M171 10h6v-2l4 3-4 3v-2h-6z" fill="#4fb4f0"/>
<path d="M196 9h14v8h-14z" fill="#f0f0f0"/><rect x="199" y="4" width="8" height="5" fill="#f4f4f4"/><rect x="199" y="15" width="8" height="5" fill="#5ab0ea"/>
<path d="M219 12l5-4v2.5c5 0 8 2 9 6-2-2.5-5-3-9-3v2.5z" fill="#bdbdbd"/>
<path d="M238.5 10.25h6l-3.0 3.5z" fill="#bdbdbd"/>
<path d="M268 12l-5-4v2.5c-5 0-8 2-9 6 2-2.5 5-3 9-3v2.5z" fill="#bdbdbd"/>
<path d="M275.5 10.25h6l-3.0 3.5z" fill="#bdbdbd"/>
<rect x="287" y="7" width="8" height="1.5" fill="#fafafa"/>
<path d="M287.0 9.5h8l-4.0 5z" fill="#fafafa"/>
<text x="686" y="16" font-size="12" fill="#050505" text-anchor="start" xml:space="preserve" textLength="240" lengthAdjust="spacingAndGlyphs">Autodesk AutoCAD 2019    KSR-SJP-C124.dwg</text>
<path d="M1314 7l4 4-4 4z" fill="#f4f4f4"/>
<rect x="1323.5" y="1.5" width="179" height="21" fill="#777" stroke="#333"/>
<text x="1327" y="16" font-size="12" fill="#cfcfcf" text-anchor="start" font-style="italic" textLength="122" lengthAdjust="spacingAndGlyphs">Type a keyword or phrase</text>
<g fill="#f4f4f4" stroke="#1c2a33" stroke-width="1"><path d="M1510.5 7.5h3v4h3v-4h3l1.5 5v6h-5v-3h-2v3h-5v-6z"/><rect x="1510" y="13.5" width="4.5" height="5"/><rect x="1516.5" y="13.5" width="4.5" height="5"/></g>
<circle cx="1540" cy="8" r="3.5" fill="#f4f4f4" stroke="#222"/><path d="M1533 19c0-4 3-6 7-6s7 2 7 6z" fill="#f4f4f4" stroke="#222"/>
<text x="1552" y="17" font-size="12" fill="#f4f4f4" text-anchor="start" >Sign In</text>
<path d="M1637.5 10.75h6l-3.0 3.5z" fill="#f4f4f4"/>
<path d="M1655 6h3l2 8h8l2-6h-11" fill="none" stroke="#1c1c1c" stroke-width="1.5"/><circle cx="1661" cy="17" r="1.5" fill="#1c1c1c"/><circle cx="1667" cy="17" r="1.5" fill="#1c1c1c"/>
<path d="M1686 5l-6.5 11h13z" fill="none" stroke="#1c1c1c" stroke-width="1.4"/><g fill="#f4f4f4" stroke="#1c1c1c" stroke-width="1"><circle cx="1686" cy="5.5" r="2"/><circle cx="1680" cy="16" r="2"/><circle cx="1692" cy="16" r="2"/></g>
<path d="M1699.5 10.25h6l-3.0 3.5z" fill="#f4f4f4"/>
<line x1="1716" y1="3" x2="1716" y2="21" stroke="#bbb"/>
<circle cx="1731" cy="12" r="7.5" fill="#fafafa" stroke="#1e2a3a" stroke-width="1.5"/>
<text x="1731" y="16.5" font-size="12" fill="#1e2a3a" text-anchor="middle" font-weight="bold">?</text>
<path d="M1746.5 10.25h6l-3.0 3.5z" fill="#f4f4f4"/>
<rect x="1797" y="11" width="13" height="1.2" fill="#f0f0f0"/>
<rect x="1843.5" y="8.5" width="9" height="9" fill="none" stroke="#f0f0f0"/><path d="M1845.5 8.5v-2h9v9h-2" fill="none" stroke="#f0f0f0"/>
<path d="M1889 6l12 12M1901 6l-12 12" stroke="#f0f0f0" stroke-width="1.3"/>
<rect x="0" y="24" width="1919" height="21" fill="#535353"/>
<rect x="0" y="24" width="1919" height="1" fill="#2b2b2b"/>
<rect x="0" y="44" width="1919" height="1" fill="#2b2b2b"/>
<path d="M46.5 45v-16.5q0-1.5 1.5-1.5h47q1.5 0 1.5 1.5v16.5" fill="url(#gHome)" stroke="#2e2e2e"/>
<text x="55" y="39" font-size="12" fill="#f0f0f0" text-anchor="start" >Home</text>
<text x="108" y="39" font-size="12" fill="#f0f0f0" text-anchor="start" >Insert</text>
<text x="157" y="39" font-size="12" fill="#f0f0f0" text-anchor="start" >Annotate</text>
<text x="226" y="39" font-size="12" fill="#f0f0f0" text-anchor="start" >Parametric</text>
<text x="303" y="39" font-size="12" fill="#f0f0f0" text-anchor="start" >View</text>
<text x="348" y="39" font-size="12" fill="#f0f0f0" text-anchor="start" >Manage</text>
<text x="411" y="39" font-size="12" fill="#f0f0f0" text-anchor="start" >Output</text>
<text x="469" y="39" font-size="12" fill="#f0f0f0" text-anchor="start" >Add-ins</text>
<text x="531" y="39" font-size="12" fill="#f0f0f0" text-anchor="start" >Collaborate</text>
<text x="612" y="39" font-size="12" fill="#f0f0f0" text-anchor="start" >Express Tools</text>
<text x="701" y="39" font-size="12" fill="#f0f0f0" text-anchor="start" >Featured Apps</text>
<text x="797" y="39" font-size="12" fill="#f0f0f0" text-anchor="start" >Layout</text>
<rect x="788.5" y="26.5" width="53" height="17" fill="none" stroke="#5a6a8a"/>
<rect x="864" y="31" width="13" height="8" rx="2.5" fill="#f0f0f0"/><path d="M867 37l3.5-4 3.5 4z" fill="#333"/>
<path d="M882.0 33.25h6l-3.0 3.5z" fill="#f0f0f0"/>
<rect x="0.5" y="0.5" width="40" height="40" fill="url(#gLogo)" stroke="#202020"/>
<path d="M13 3 L19.5 3 L28 29 L22 29 L20 22.5 L12 22.5 L10 29 L5 29 Z M16.2 8.5 L19 16.5 L13.6 16.5 Z" fill="#d01a1e" fill-rule="evenodd"/>
<path d="M6 28 L9 22 L11 22 L10 29 Z M23 23 L26 23 L28 29 L23 29 Z" fill="#f08080" opacity="0.7"/><path d="M16 3 L19.5 3 L21 8 L17 8 Z" fill="#a01014" opacity="0.6"/>
<path d="M31.0 17.5h7l-3.5 4z" fill="#1a1a1a"/>
<rect x="0" y="45" width="1919" height="98" fill="url(#gRibR)"/>
<rect x="0" y="45" width="1670" height="98" fill="#3a3a3a"/>
<rect x="2" y="45" width="223" height="97" fill="#5c5c5c"/>
<rect x="2" y="124" width="223" height="17" fill="url(#gPl)"/>
<rect x="2" y="45" width="0.8" height="96" fill="#686868"/><rect x="2" y="140.5" width="223" height="0.8" fill="#686868"/>
<rect x="227" y="45" width="248" height="97" fill="#5c5c5c"/>
<rect x="227" y="124" width="248" height="17" fill="url(#gPl)"/>
<rect x="227" y="45" width="0.8" height="96" fill="#686868"/><rect x="227" y="140.5" width="248" height="0.8" fill="#686868"/>
<rect x="476" y="45" width="189" height="97" fill="#5c5c5c"/>
<rect x="476" y="124" width="189" height="17" fill="url(#gPl)"/>
<rect x="476" y="45" width="0.8" height="96" fill="#686868"/><rect x="476" y="140.5" width="189" height="0.8" fill="#686868"/>
<rect x="666" y="45" width="272" height="97" fill="#5c5c5c"/>
<rect x="666" y="124" width="272" height="17" fill="url(#gPl)"/>
<rect x="666" y="45" width="0.8" height="96" fill="#686868"/><rect x="666" y="140.5" width="272" height="0.8" fill="#686868"/>
<rect x="939" y="45" width="158" height="97" fill="#5c5c5c"/>
<rect x="939" y="124" width="158" height="17" fill="url(#gPl)"/>
<rect x="939" y="45" width="0.8" height="96" fill="#686868"/><rect x="939" y="140.5" width="158" height="0.8" fill="#686868"/>
<rect x="1098" y="45" width="264" height="97" fill="#5c5c5c"/>
<rect x="1098" y="124" width="264" height="17" fill="url(#gPl)"/>
<rect x="1098" y="45" width="0.8" height="96" fill="#686868"/><rect x="1098" y="140.5" width="264" height="0.8" fill="#686868"/>
<rect x="1363" y="45" width="69" height="97" fill="#5c5c5c"/>
<rect x="1363" y="124" width="69" height="17" fill="url(#gPl)"/>
<rect x="1363" y="45" width="0.8" height="96" fill="#686868"/><rect x="1363" y="140.5" width="69" height="0.8" fill="#686868"/>
<rect x="1433" y="45" width="96" height="97" fill="#5c5c5c"/>
<rect x="1433" y="124" width="96" height="17" fill="url(#gPl)"/>
<rect x="1433" y="45" width="0.8" height="96" fill="#686868"/><rect x="1433" y="140.5" width="96" height="0.8" fill="#686868"/>
<rect x="1530" y="45" width="79" height="97" fill="#5c5c5c"/>
<rect x="1530" y="124" width="79" height="17" fill="url(#gPl)"/>
<rect x="1530" y="45" width="0.8" height="96" fill="#686868"/><rect x="1530" y="140.5" width="79" height="0.8" fill="#686868"/>
<rect x="1610" y="45" width="60" height="97" fill="#5c5c5c"/>
<rect x="1610" y="124" width="60" height="17" fill="url(#gPl)"/>
<rect x="1610" y="45" width="0.8" height="96" fill="#686868"/><rect x="1610" y="140.5" width="60" height="0.8" fill="#686868"/>
<rect x="0" y="142" width="1919" height="1" fill="#2c2c2c"/><rect x="0" y="143" width="1919" height="1" fill="#606060"/>
<text x="93" y="137" font-size="12" fill="#f0f0f0" text-anchor="start" >Draw</text>
<path d="M125.5 130.25h8l-4.0 4.5z" fill="#f0f0f0"/>
<text x="325" y="137" font-size="12" fill="#f0f0f0" text-anchor="start" >Modify</text>
<path d="M369.0 130.25h8l-4.0 4.5z" fill="#f0f0f0"/>
<text x="533" y="137" font-size="12" fill="#f0f0f0" text-anchor="start" >Annotation</text>
<path d="M599.0 130.25h8l-4.0 4.5z" fill="#f0f0f0"/>
<text x="777" y="137" font-size="12" fill="#f0f0f0" text-anchor="start" >Layers</text>
<path d="M818.0 130.25h8l-4.0 4.5z" fill="#f0f0f0"/>
<text x="997" y="137" font-size="12" fill="#f0f0f0" text-anchor="start" >Block</text>
<path d="M1032.0 130.25h8l-4.0 4.5z" fill="#f0f0f0"/>
<text x="1190" y="137" font-size="12" fill="#f0f0f0" text-anchor="start" >Properties</text>
<path d="M1250.0 130.25h8l-4.0 4.5z" fill="#f0f0f0"/>
<text x="1373" y="137" font-size="12" fill="#f0f0f0" text-anchor="start" >Groups</text>
<path d="M1416.0 130.25h8l-4.0 4.5z" fill="#f0f0f0"/>
<text x="1454" y="137" font-size="12" fill="#f0f0f0" text-anchor="start" >Utilities</text>
<path d="M1499.0 130.25h8l-4.0 4.5z" fill="#f0f0f0"/>
<text x="1544" y="137" font-size="12" fill="#f0f0f0" text-anchor="start" >Clipboard</text>
<text x="1615" y="137" font-size="12" fill="#f0f0f0" text-anchor="start" >View</text>
<path d="M1645.0 130.25h8l-4.0 4.5z" fill="#f0f0f0"/>
<path d="M1352 130.5l5.5 5.5M1358 131.5v4.5h-4.5" fill="none" stroke="#e0e0e0" stroke-width="1"/>
<path d="M1660 130.5l5.5 5.5M1666 131.5v4.5h-4.5" fill="none" stroke="#e0e0e0" stroke-width="1"/>
<line x1="9" y1="82" x2="37" y2="54" stroke="#e6e6e6" stroke-width="1"/>
<rect x="7.0" y="81.0" width="3" height="3" fill="#5ab8f0"/>
<rect x="36.0" y="52.0" width="3" height="3" fill="#5ab8f0"/>
<text x="12" y="99" font-size="12" fill="#f0f0f0" text-anchor="start" >Line</text>
<path d="M51.5 75.5h20M71.5 60.5a7.5 7.5 0 0 1 0 15" fill="none" stroke="#e6e6e6"/>
<rect x="50.0" y="74.0" width="3" height="3" fill="#5ab8f0"/>
<rect x="70.0" y="74.0" width="3" height="3" fill="#5ab8f0"/>
<rect x="70.0" y="59.0" width="3" height="3" fill="#5ab8f0"/>
<text x="45" y="99" font-size="12" fill="#f0f0f0" text-anchor="start" >Polyline</text>
<circle cx="115.5" cy="67.5" r="15" fill="none" stroke="#e6e6e6" stroke-width="1.1"/><path d="M115.5 67.5l9-9M125 58l-5 1 4 4z" stroke="#5ab8f0" fill="#5ab8f0"/>
<rect x="114.0" y="66.0" width="3" height="3" fill="#5ab8f0"/>
<text x="101" y="99" font-size="12" fill="#f0f0f0" text-anchor="start" >Circle</text>
<path d="M112.0 104.0h7l-3.5 4z" fill="#f0f0f0"/>
<path d="M149.5 80.5Q152 60 176 54.5" fill="none" stroke="#e6e6e6" stroke-width="1.1"/>
<rect x="148.0" y="80.0" width="3" height="3" fill="#5ab8f0"/>
<rect x="156.0" y="61.0" width="3" height="3" fill="#5ab8f0"/>
<rect x="175.0" y="53.0" width="3" height="3" fill="#5ab8f0"/>
<text x="152" y="99" font-size="12" fill="#f0f0f0" text-anchor="start" >Arc</text>
<path d="M158.0 104.0h7l-3.5 4z" fill="#f0f0f0"/>
<rect x="188.5" y="56.5" width="14" height="10" fill="none" stroke="#e6e6e6"/>
<rect x="186.75" y="54.75" width="2.5" height="2.5" fill="#5ab8f0"/>
<rect x="200.75" y="64.75" width="2.5" height="2.5" fill="#5ab8f0"/>
<path d="M209.0 59.0h7l-3.5 4z" fill="#f0f0f0"/>
<ellipse cx="194" cy="85" rx="7" ry="5" fill="none" stroke="#e6e6e6" stroke-dasharray="6 2"/>
<rect x="192.75" y="78.75" width="2.5" height="2.5" fill="#5ab8f0"/>
<rect x="192.75" y="83.75" width="2.5" height="2.5" fill="#5ab8f0"/>
<rect x="199.75" y="83.75" width="2.5" height="2.5" fill="#5ab8f0"/>
<path d="M209.0 83.0h7l-3.5 4z" fill="#f0f0f0"/>
<path d="M187 105h16M187 115h16M189 103v14M201 103v14" stroke="#e6e6e6" stroke-width="1.2"/><path d="M191 113l4-6M194 113l4-6M197 113l3-5" stroke="#5ab8f0"/>
<path d="M209.0 107.0h7l-3.5 4z" fill="#f0f0f0"/>
<path d="M240.5 53v15M233 60.5h15" stroke="#e6e6e6" stroke-width="1.5"/><path d="M240.5 53l-3 3h6zM240.5 68l-3-3h6zM233 60.5l3-3v6zM248 60.5l-3-3v6z" fill="#e6e6e6"/>
<text x="254" y="65" font-size="12" fill="#f0f0f0" text-anchor="start" >Move</text>
<path d="M318 57a6.5 6.5 0 1 0 1.5 4" fill="none" stroke="#e6e6e6" stroke-width="1.2"/><path d="M315 53l4 4-5 1z" fill="#e6e6e6"/>
<text x="326" y="65" font-size="12" fill="#f0f0f0" text-anchor="start" >Rotate</text>
<path d="M375 54h3M381 54h3M386 54h3" stroke="#5ab8f0"/><path d="M379 55l8 10M387 55l-6 10" stroke="#e6e6e6" stroke-width="1.2"/><circle cx="380" cy="67" r="2" fill="none" stroke="#e6e6e6"/><circle cx="387" cy="67" r="2" fill="none" stroke="#e6e6e6"/>
<text x="396" y="65" font-size="12" fill="#f0f0f0" text-anchor="start" >Trim</text>
<path d="M428.0 59.0h7l-3.5 4z" fill="#f0f0f0"/>
<path d="M452 67l10-11 3 3-10 10z" fill="#f4c46a"/><path d="M451 66l3-3 3 3-3 3z" fill="#e04848"/><path d="M450 69h2M455 69h10" stroke="#5ab8f0"/>
<circle cx="236.5" cy="79" r="3" fill="none" stroke="#e6e6e6"/><path d="M241 78h5v4" fill="none" stroke="#e6e6e6"/><circle cx="239" cy="89" r="3" fill="none" stroke="#5ab8f0"/><circle cx="244" cy="89" r="3" fill="none" stroke="#5ab8f0"/>
<text x="254" y="89" font-size="12" fill="#f0f0f0" text-anchor="start" >Copy</text>
<path d="M311 78l-6 14h6z" fill="none" stroke="#e6e6e6"/><path d="M313 78l6 14h-6z" fill="none" stroke="#5ab8f0"/>
<text x="326" y="89" font-size="12" fill="#f0f0f0" text-anchor="start" >Mirror</text>
<path d="M375 93v-6a7 7 0 0 1 7-7h2M386 80h4" fill="none" stroke="#e6e6e6"/><path d="M375 93v-6a7 7 0 0 1 7-7" fill="none" stroke="#5ab8f0" stroke-width="1"/>
<text x="396" y="89" font-size="12" fill="#f0f0f0" text-anchor="start" >Fillet</text>
<path d="M430.0 83.0h7l-3.5 4z" fill="#f0f0f0"/>
<path d="M450.5 81.5h10v10h-10zM450.5 81.5l4-4h10v10l-4 4M460.5 81.5l4-4" fill="none" stroke="#5ab8f0"/>
<path d="M233.5 102.5h6v14h-6z" fill="none" stroke="#e6e6e6"/><path d="M240 102.5h3l5 14h-8" fill="none" stroke="#5ab8f0"/><path d="M236 112h6l-2-2M242 112l-2 2" stroke="#e6e6e6" fill="none"/>
<text x="254" y="113" font-size="12" fill="#f0f0f0" text-anchor="start" >Stretch</text>
<rect x="305.5" y="101.5" width="15" height="15" fill="none" stroke="#5ab8f0"/><rect x="305.5" y="108.5" width="8" height="8" fill="none" stroke="#e6e6e6"/>
<text x="326" y="113" font-size="12" fill="#f0f0f0" text-anchor="start" >Scale</text>
<rect x="375.5" y="102.5" width="5" height="5" fill="none" stroke="#5ab8f0"/><rect x="375.5" y="110.5" width="5" height="5" fill="none" stroke="#5ab8f0"/><rect x="383.5" y="102.5" width="5" height="5" fill="none" stroke="#5ab8f0"/><rect x="383.5" y="110.5" width="5" height="5" fill="none" stroke="#5ab8f0"/>
<text x="396" y="113" font-size="12" fill="#f0f0f0" text-anchor="start" >Array</text>
<path d="M430.0 107.0h7l-3.5 4z" fill="#f0f0f0"/>
<path d="M465 103h-9a5.5 5.5 0 0 0 0 11h9M465 106h-8a2.5 2.5 0 0 0 0 5h8" fill="none" stroke="#5ab8f0" stroke-width="1.2"/>
<path d="M487 82l11-28h4l11 28h-4.5l-3-8h-11l-3 8zM495 70h8l-4-11z" fill="#e0e0e0" fill-rule="evenodd"/>
<text x="490" y="98.5" font-size="12" fill="#f0f0f0" text-anchor="start" >Text</text>
<path d="M496.0 104.0h7l-3.5 4z" fill="#f0f0f0"/>
<rect x="521.5" y="49.5" width="62" height="71" fill="url(#gDim)" stroke="#2a2a2a"/>
<path d="M536.5 52v32M568 52v32M537 58.5h31" stroke="#dcdcdc" stroke-width="1"/><path d="M537 58.5l5-2.5v5zM568 58.5l-5-2.5v5z" fill="#dcdcdc"/>
<path d="M552 68v6M544 72l4 5M560 72l-4 5M540 79h5M564 79h-5" stroke="#f4c46a" stroke-width="2.2"/>
<text x="524" y="98.5" font-size="12" fill="#f0f0f0" text-anchor="start" >Dimension</text>
<path d="M589.5 54v14M605 54v14" stroke="#e6e6e6"/><path d="M590 58.5h15" stroke="#5ab8f0"/>
<text x="610" y="65" font-size="12" fill="#f0f0f0" text-anchor="start" >Linear</text>
<path d="M649.0 59.0h7l-3.5 4z" fill="#f0f0f0"/>
<circle cx="601" cy="81" r="3.5" fill="none" stroke="#e6e6e6"/><path d="M598 82l-3 1-5 8" fill="none" stroke="#e6e6e6"/><path d="M590 92l1-5 3 2z" fill="#e6e6e6"/>
<text x="610" y="89" font-size="12" fill="#f0f0f0" text-anchor="start" >Leader</text>
<path d="M652.0 83.0h7l-3.5 4z" fill="#f0f0f0"/>
<rect x="589.5" y="102.5" width="16" height="13" fill="none" stroke="#e6e6e6"/><path d="M589.5 105.5h16M589.5 109h16M589.5 112.5h16M594.5 105v11M600 105v11" stroke="#e6e6e6" stroke-width="1"/>
<text x="610" y="113" font-size="12" fill="#f0f0f0" text-anchor="start" >Table</text>
<path d="M684 60l5-7h18l-5 7zM684 68l5-7h18l-5 7zM684 76l5-7h18l-5 7z" fill="#d8d8d8" stroke="#5c5c5c" stroke-width="0.8"/>
<rect x="699" y="66" width="13" height="18" fill="#eaeaea"/><rect x="701" y="68" width="9" height="6" fill="#5ab8f0"/><path d="M702 78h7M702 81h7" stroke="#444"/>
<text x="683" y="98.5" font-size="12" fill="#f0f0f0" text-anchor="start" >Layer</text>
<text x="670" y="113" font-size="12" fill="#f0f0f0" text-anchor="start" >Properties</text>
<rect x="727.5" y="50.5" width="207" height="21" fill="#4e4e4e" stroke="#2c2c2c"/>
<circle cx="739" cy="58.5" r="5" fill="#f4c46a"/><rect x="737" y="63" width="4" height="4" fill="#fff"/>
<circle cx="757" cy="60" r="4" fill="#f4c46a"/><path d="M757 53v2M757 65v2M750 60h2M762 60h2M752 55l1.5 1.5M760.5 63.5l1.5 1.5M752 65l1.5-1.5M760.5 56.5l1.5-1.5" stroke="#f4c46a"/>
<rect x="770.5" y="54.5" width="12" height="12" fill="#777" stroke="#ddd" stroke-dasharray="3 2"/><circle cx="780" cy="65" r="3" fill="#f4c46a"/>
<rect x="789" y="60" width="12" height="8" fill="#f4c46a"/><path d="M797 60v-3a3 3 0 0 1 6 0v2" fill="none" stroke="#f4c46a" stroke-width="1.5"/>
<rect x="810.5" y="54.5" width="12" height="13" fill="#fff" stroke="#111"/>
<text x="828" y="65" font-size="12" fill="#e8f0f8" text-anchor="start" >0</text>
<path d="M925.5 58.75h8l-4.0 4.5z" fill="#f0f0f0"/>
<path d="M731 82l4-5h9l-4 5z" fill="#d8d8d8"/>
<path d="M731 106l4-5h9l-4 5z" fill="#d8d8d8"/>
<path d="M731 110l4-5h9l-4 5zM731 114l4-5h9l-4 5z" fill="#cfcfcf" stroke="#5c5c5c" stroke-width="0.5"/>
<path d="M755 82l4-5h9l-4 5z" fill="#d8d8d8"/>
<path d="M755 86l4-5h9l-4 5zM755 90l4-5h9l-4 5z" fill="#cfcfcf" stroke="#5c5c5c" stroke-width="0.5"/>
<path d="M755 106l4-5h9l-4 5z" fill="#d8d8d8"/>
<path d="M755 110l4-5h9l-4 5zM755 114l4-5h9l-4 5z" fill="#cfcfcf" stroke="#5c5c5c" stroke-width="0.5"/>
<path d="M779 82l4-5h9l-4 5z" fill="#d8d8d8"/>
<path d="M779 106l4-5h9l-4 5z" fill="#d8d8d8"/>
<path d="M779 110l4-5h9l-4 5zM779 114l4-5h9l-4 5z" fill="#cfcfcf" stroke="#5c5c5c" stroke-width="0.5"/>
<path d="M803 82l4-5h9l-4 5z" fill="#d8d8d8"/>
<path d="M803 106l4-5h9l-4 5z" fill="#d8d8d8"/>
<path d="M828 82l4-5h9l-4 5z" fill="#d8d8d8"/>
<path d="M828 86l4-5h9l-4 5zM828 90l4-5h9l-4 5z" fill="#cfcfcf" stroke="#5c5c5c" stroke-width="0.5"/>
<path d="M828 106l4-5h9l-4 5z" fill="#d8d8d8"/>
<path d="M828 110l4-5h9l-4 5zM828 114l4-5h9l-4 5z" fill="#cfcfcf" stroke="#5c5c5c" stroke-width="0.5"/>
<circle cx="742" cy="88" r="3.5" fill="#5ab8f0"/><circle cx="742" cy="112" r="3.5" fill="#f4c46a"/>
<path d="M767 86l-5 5M762 91h4M762 91v-4" stroke="#eee" fill="none"/><path d="M762 114l5-5M767 109h-4M767 109v4" stroke="#eee" fill="none"/>
<text x="791" y="93" font-size="10" fill="#5ab8f0">✻</text><circle cx="791" cy="112" r="3" fill="#f4c46a"/>
<rect x="811" y="87" width="7" height="6" fill="#5ab8f0"/><path d="M812.5 87v-2a2 2 0 0 1 4 0v2" fill="none" stroke="#5ab8f0" stroke-width="1.3"/>
<rect x="810" y="111" width="7" height="6" fill="#f4c46a"/><path d="M814 111v-2a2 2 0 0 1 4 0" fill="none" stroke="#f4c46a" stroke-width="1.3"/>
<circle cx="834" cy="78" r="3" fill="#cfcfcf"/><path d="M827 84l4-4h11l-4 4z" fill="#5ab8f0"/><path d="M836 115l5-5 2 2-5 5z" fill="#f4c46a"/>
<text x="848" y="89" font-size="12" fill="#f0f0f0" text-anchor="start" >Make Current</text>
<text x="848" y="113" font-size="12" fill="#f0f0f0" text-anchor="start" >Match Layer</text>
<path d="M958 50h13l4 4v20h-17z" fill="#8ccaf2"/><path d="M971 50v4h4z" fill="#dff"/>
<rect x="944.5" y="60.5" width="21" height="15" fill="#777" stroke="#ddd"/><circle cx="964.5" cy="74" r="7" fill="#6a6a6a" stroke="#ddd"/><rect x="943" y="73" width="3" height="3" fill="#ddd"/>
<text x="945" y="97.5" font-size="12" fill="#f0f0f0" text-anchor="start" >Insert</text>
<path d="M956.0 103.0h7l-3.5 4z" fill="#f0f0f0"/>
<rect x="983.5" y="57.5" width="10" height="7" fill="#777" stroke="#ddd"/><circle cx="993" cy="65" r="3.5" fill="#666" stroke="#ddd"/>
<text x="991" y="60" font-size="10" fill="#f4c46a">✷</text>
<rect x="983.5" y="81.5" width="10" height="7" fill="#777" stroke="#ddd"/><circle cx="993" cy="89" r="3.5" fill="#666" stroke="#ddd"/>
<path d="M991 86l5-6 2 2-5 6z" fill="#f4c46a"/><path d="M996 80l1-1 2 2-1 1z" fill="#e04848"/>
<path d="M983 103h8l4 4-7 9-5-5z" fill="#ddd"/>
<path d="M991 110l5-6 2 2-5 6z" fill="#f4c46a"/><path d="M996 104l1-1 2 2-1 1z" fill="#e04848"/>
<text x="1004" y="65" font-size="12" fill="#f0f0f0" text-anchor="start" >Create</text>
<text x="1004" y="89" font-size="12" fill="#f0f0f0" text-anchor="start" >Edit</text>
<text x="1004" y="113" font-size="12" fill="#f0f0f0" text-anchor="start" >Edit Attributes</text>
<path d="M1086.0 107.0h7l-3.5 4z" fill="#f0f0f0"/>
<rect x="1115.5" y="52" width="20" height="28" fill="#dedede"/><rect x="1119" y="55.5" width="13" height="9" fill="#5ab8f0" stroke="#777" stroke-width="0.5"/><path d="M1119 70h7M1119 74h5M1121 68v4" stroke="#555"/>
<path d="M1130 75l6-6 5 5-6 6z" fill="#f4c46a"/><path d="M1136 69l5-5 5 5-5 5z" fill="#eee"/>
<text x="1114" y="98.5" font-size="12" fill="#f0f0f0" text-anchor="start" >Match</text>
<text x="1104" y="113" font-size="12" fill="#f0f0f0" text-anchor="start" >Properties</text>
<g transform="translate(1171 60)"><path d="M0 0L0-8A8 8 0 0 1 6.9-4Z" fill="#f2b33d"/><path d="M0 0L6.9-4A8 8 0 0 1 6.9 4Z" fill="#f07848"/><path d="M0 0L6.9 4A8 8 0 0 1 0 8Z" fill="#e05858"/><path d="M0 0L0 8A8 8 0 0 1-6.9 4Z" fill="#6a6af0"/><path d="M0 0L-6.9 4A8 8 0 0 1-6.9-4Z" fill="#38b8b0"/><path d="M0 0L-6.9-4A8 8 0 0 1 0-8Z" fill="#58c058"/></g>
<rect x="1181.5" y="50.5" width="179" height="21.0" fill="url(#gCombo)" stroke="#2c2c2c"/>
<path d="M1351.0 58.75h8l-4.0 4.5z" fill="#f0f0f0"/>
<rect x="1181.5" y="73.5" width="179" height="21.0" fill="url(#gCombo)" stroke="#2c2c2c"/>
<path d="M1351.0 81.75h8l-4.0 4.5z" fill="#f0f0f0"/>
<rect x="1181.5" y="97.5" width="179" height="21.0" fill="url(#gCombo)" stroke="#2c2c2c"/>
<path d="M1351.0 105.75h8l-4.0 4.5z" fill="#f0f0f0"/>
<rect x="1194.5" y="53.5" width="15" height="15" fill="#0a0000" stroke="#aaa"/>
<text x="1220" y="65" font-size="12" fill="#f0f0f0" text-anchor="start" >ByLayer</text>
<path d="M1185 83.5h64M1185 108h64" stroke="#f0f0f0" stroke-width="1.2"/>
<text x="1251" y="89" font-size="12" fill="#f0f0f0" text-anchor="start" >ByLayer</text>
<text x="1251" y="113" font-size="12" fill="#f0f0f0" text-anchor="start" >BYLAYER</text>
<path d="M1163 77h16M1163 83h16M1163 89.5h16" stroke="#e8e8e8" stroke-width="2.5"/>
<path d="M1163 101h16M1163 105h16M1163 109h16M1163 113h16" stroke="#e8e8e8" stroke-width="1.2" stroke-dasharray="2 1"/>
<path d="M1373 56h-3v28h3M1386 56h3M1386 84h3v-10" fill="none" stroke="#eaeaea" stroke-width="1.5"/><rect x="1375" y="60" width="9" height="6" fill="#5ab8f0"/><circle cx="1379" cy="74" r="4" fill="#888" stroke="#ccc"/>
<text x="1385" y="67" font-size="13" fill="#f4c46a">✦</text>
<text x="1369" y="98.5" font-size="12" fill="#f0f0f0" text-anchor="start" >Group</text>
<rect x="1413" y="55" width="6" height="5" fill="none" stroke="#5ab8f0"/><circle cx="1416" cy="64" r="2.5" fill="#aaa"/><path d="M1421 58l5 5M1426 58l-5 5" stroke="#e04848" stroke-width="1.5"/><path d="M1421 54h2v15h-2" fill="none" stroke="#ddd"/>
<path d="M1412 78h-2v14h2" fill="none" stroke="#ddd"/><rect x="1413" y="79" width="6" height="5" fill="none" stroke="#5ab8f0"/><circle cx="1416" cy="88" r="2.5" fill="#aaa"/><path d="M1419 92l5-5 2 2-5 5z" fill="#f4c46a"/>
<rect x="1406.5" y="98.5" width="23" height="22" fill="#5a72a6" stroke="#2e3a55"/><path d="M1412 102h-2v14h2" fill="none" stroke="#ddd"/><rect x="1413" y="103" width="5" height="4" fill="none" stroke="#5c5"/><circle cx="1415.5" cy="112" r="2" fill="none" stroke="#5c5"/><path d="M1420 106v11l3-3 2 4 2-1-2-4h4z" fill="#fff"/>
<path d="M1455 59v8M1483 59v8M1456 63h26" stroke="#ddd"/><path d="M1456 63l4-2v4zM1482 63l-4-2v4z" fill="#ddd"/><rect x="1455" y="69" width="28" height="7" fill="#f4c46a"/><path d="M1458 69v3M1461 69v2M1464 69v3M1467 69v2M1470 69v3M1473 69v2M1476 69v3M1479 69v2" stroke="#8a6a30" stroke-width="0.8"/>
<text x="1446" y="98.5" font-size="12" fill="#f0f0f0" text-anchor="start" >Measure</text>
<path d="M1465.0 104.0h7l-3.5 4z" fill="#f0f0f0"/>
<path d="M1507 57v12l3-3 2 4 2-1-2-4h4z" fill="#eee"/><rect x="1514" y="61" width="9" height="8" fill="#e8e8e8"/><path d="M1516 63h5M1516 65h5M1516 67h5" stroke="#5ab8f0"/><path d="M1515 53l-2 5h3l-2 4" stroke="#f4c46a" fill="none"/>
<rect x="1507.5" y="77.5" width="12" height="12" fill="#9ac89a" stroke="#3c3" stroke-dasharray="2 1"/><path d="M1514 80v12l3-3 2 4 2-1-2-4h4z" fill="#eee"/>
<rect x="1509" y="101" width="12" height="16" fill="#ddd"/><rect x="1511" y="103" width="8" height="3" fill="#555"/><rect x="1511" y="108" width="2" height="2" fill="#555"/><rect x="1511" y="111" width="2" height="2" fill="#555"/><rect x="1511" y="114" width="2" height="2" fill="#555"/><rect x="1514" y="108" width="2" height="2" fill="#555"/><rect x="1514" y="111" width="2" height="2" fill="#555"/><rect x="1514" y="114" width="2" height="2" fill="#555"/><rect x="1517" y="108" width="2" height="2" fill="#555"/><rect x="1517" y="111" width="2" height="2" fill="#555"/><rect x="1517" y="114" width="2" height="2" fill="#555"/>
<rect x="1544" y="55" width="22" height="26" fill="#d6a860"/><rect x="1551" y="52" width="8" height="4" fill="#ddd"/><path d="M1552 62h13l5 5v17h-18z" fill="#e0e0e0"/><path d="M1565 62v5h5" fill="#bbb"/>
<text x="1543" y="98.5" font-size="12" fill="#f0f0f0" text-anchor="start" >Paste</text>
<path d="M1554.0 104.0h7l-3.5 4z" fill="#f0f0f0"/>
<path d="M1587 54h11v14h-11z" fill="#ddd"/><path d="M1589 57h7M1589 60h6M1589 63h5" stroke="#777"/><path d="M1595 59l7 8M1602 59l-7 8" stroke="#eee" stroke-width="1.2"/><circle cx="1596" cy="68" r="2" fill="#5c5c5c" stroke="#eee"/><circle cx="1602" cy="68" r="2" fill="#5c5c5c" stroke="#eee"/>
<path d="M1588 77h8l2 2v11h-10z" fill="#ccc"/><path d="M1591 80h8l2 2v11h-10z" fill="#ddd" stroke="#5c5c5c" stroke-width="0.6"/>
<path d="M1625 56h15v12h17v12h-32z" fill="#dcdcdc"/>
<text x="1629" y="98.5" font-size="12" fill="#f0f0f0" text-anchor="start" >Base</text>
<path d="M1638.0 104.0h7l-3.5 4z" fill="#f0f0f0"/>
<rect x="0" y="144" width="1919" height="29" fill="#3c3c3c"/>
<rect x="0" y="169" width="1919" height="4" fill="#575757"/>
<path d="M8 169.5 C13 169.5 15 161 17 155 C19 149 21 147 28 147 L133 147 C140 147 142 149 142 155 L142 169.5 Z" fill="url(#gTab)" stroke="#424242" stroke-width="0.8"/>
<text x="32" y="163" font-size="12" fill="#d4d4d4" textLength="22.4" lengthAdjust="spacingAndGlyphs">Start</text>
<path d="M139 169.5 C144 169.5 146 161 148 155 C150 149 152 147 159 147 L258 147 C265 147 267 149 267 155 L267 169.5 Z" fill="url(#gTab)" stroke="#424242" stroke-width="0.8"/>
<text x="155" y="163" font-size="12" fill="#d4d4d4" textLength="85.0" lengthAdjust="spacingAndGlyphs">KSR-SJP-BC400*</text>
<path d="M249.5 155l7 7M256.5 155l-7 7" stroke="#2a2a2a" stroke-width="1.5"/>
<path d="M264 169.5 C269 169.5 271 161 273 155 C275 149 277 147 284 147 L383 147 C390 147 392 149 392 155 L392 169.5 Z" fill="url(#gTab)" stroke="#424242" stroke-width="0.8"/>
<text x="280" y="163" font-size="12" fill="#d4d4d4" textLength="85.0" lengthAdjust="spacingAndGlyphs">KSR-SJP-BC401*</text>
<path d="M374.5 155l7 7M381.5 155l-7 7" stroke="#2a2a2a" stroke-width="1.5"/>
<path d="M389 169.5 C394 169.5 396 161 398 155 C400 149 402 147 409 147 L508 147 C515 147 517 149 517 155 L517 169.5 Z" fill="url(#gTab)" stroke="#424242" stroke-width="0.8"/>
<text x="405" y="163" font-size="12" fill="#d4d4d4" textLength="85.0" lengthAdjust="spacingAndGlyphs">KSR-SJP-BC402*</text>
<path d="M499.5 155l7 7M506.5 155l-7 7" stroke="#2a2a2a" stroke-width="1.5"/>
<path d="M514 169.5 C519 169.5 521 161 523 155 C525 149 527 147 534 147 L633 147 C640 147 642 149 642 155 L642 169.5 Z" fill="url(#gTab)" stroke="#424242" stroke-width="0.8"/>
<text x="530" y="163" font-size="12" fill="#d4d4d4" textLength="85.0" lengthAdjust="spacingAndGlyphs">KSR-SJP-BC403*</text>
<path d="M624.5 155l7 7M631.5 155l-7 7" stroke="#2a2a2a" stroke-width="1.5"/>
<path d="M639 169.5 C644 169.5 646 161 648 155 C650 149 652 147 659 147 L758 147 C765 147 767 149 767 155 L767 169.5 Z" fill="url(#gTab)" stroke="#424242" stroke-width="0.8"/>
<text x="655" y="163" font-size="12" fill="#d4d4d4" textLength="85.0" lengthAdjust="spacingAndGlyphs">KSR-SJP-BC404*</text>
<path d="M749.5 155l7 7M756.5 155l-7 7" stroke="#2a2a2a" stroke-width="1.5"/>
<path d="M764 169.5 C769 169.5 771 161 773 155 C775 149 777 147 784 147 L881 147 C888 147 890 149 890 155 L890 169.5 Z" fill="url(#gTab)" stroke="#424242" stroke-width="0.8"/>
<text x="780" y="163" font-size="12" fill="#d4d4d4" textLength="77.9" lengthAdjust="spacingAndGlyphs">KSR-SJP-C080*</text>
<path d="M872.5 155l7 7M879.5 155l-7 7" stroke="#2a2a2a" stroke-width="1.5"/>
<path d="M887 169.5 C892 169.5 894 161 896 155 C898 149 900 147 907 147 L1003 147 C1010 147 1012 149 1012 155 L1012 169.5 Z" fill="url(#gTab)" stroke="#424242" stroke-width="0.8"/>
<text x="903" y="163" font-size="12" fill="#d4d4d4" textLength="77.9" lengthAdjust="spacingAndGlyphs">KSR-SJP-C090*</text>
<path d="M994.5 155l7 7M1001.5 155l-7 7" stroke="#2a2a2a" stroke-width="1.5"/>
<path d="M1009 169.5 C1014 169.5 1016 161 1018 155 C1020 149 1022 147 1029 147 L1139 147 C1146 147 1148 149 1148 155 L1148 169.5 Z" fill="url(#gTab)" stroke="#424242" stroke-width="0.8"/>
<text x="1025" y="163" font-size="12" fill="#d4d4d4" textLength="94.4" lengthAdjust="spacingAndGlyphs">KSR-SJP-C094 D3*</text>
<path d="M1130.5 155l7 7M1137.5 155l-7 7" stroke="#2a2a2a" stroke-width="1.5"/>
<path d="M1145 169.5 C1150 169.5 1152 161 1154 155 C1156 149 1158 147 1165 147 L1262 147 C1269 147 1271 149 1271 155 L1271 169.5 Z" fill="url(#gTab)" stroke="#424242" stroke-width="0.8"/>
<text x="1161" y="163" font-size="12" fill="#d4d4d4" textLength="77.9" lengthAdjust="spacingAndGlyphs">KSR-SJP-C100*</text>
<path d="M1253.5 155l7 7M1260.5 155l-7 7" stroke="#2a2a2a" stroke-width="1.5"/>
<path d="M1268 169.5 C1273 169.5 1275 161 1277 155 C1279 149 1281 147 1288 147 L1397 147 C1404 147 1406 149 1406 155 L1406 169.5 Z" fill="url(#gTab)" stroke="#424242" stroke-width="0.8"/>
<text x="1284" y="163" font-size="12" fill="#d4d4d4" textLength="94.4" lengthAdjust="spacingAndGlyphs">KSR-SJP-C104 D3*</text>
<path d="M1388.5 155l7 7M1395.5 155l-7 7" stroke="#2a2a2a" stroke-width="1.5"/>
<path d="M1403 169.5 C1408 169.5 1410 161 1412 155 C1414 149 1416 147 1423 147 L1520 147 C1527 147 1529 149 1529 155 L1529 169.5 Z" fill="url(#gTab)" stroke="#424242" stroke-width="0.8"/>
<text x="1419" y="163" font-size="12" fill="#d4d4d4" textLength="77.1" lengthAdjust="spacingAndGlyphs">KSR-SJP-C110*</text>
<path d="M1511.5 155l7 7M1518.5 155l-7 7" stroke="#2a2a2a" stroke-width="1.5"/>
<path d="M1526 169.5 C1531 169.5 1533 161 1535 155 C1537 149 1539 147 1546 147 L1654 147 C1661 147 1663 149 1663 155 L1663 169.5 Z" fill="url(#gTab)" stroke="#424242" stroke-width="0.8"/>
<text x="1542" y="163" font-size="12" fill="#d4d4d4" textLength="93.6" lengthAdjust="spacingAndGlyphs">KSR-SJP-C114 D3*</text>
<path d="M1645.5 155l7 7M1652.5 155l-7 7" stroke="#2a2a2a" stroke-width="1.5"/>
<path d="M1660 169.5 C1665 169.5 1667 161 1669 155 C1671 149 1673 147 1680 147 L1778 147 C1785 147 1787 149 1787 155 L1787 169.5 Z" fill="url(#gTab)" stroke="#424242" stroke-width="0.8"/>
<text x="1676" y="163" font-size="12" fill="#d4d4d4" textLength="77.9" lengthAdjust="spacingAndGlyphs">KSR-SJP-C120*</text>
<path d="M1769.5 155l7 7M1776.5 155l-7 7" stroke="#2a2a2a" stroke-width="1.5"/>
<path d="M1784 169.5 C1789 169.5 1791 161 1793 155 C1795 149 1797 147 1804 147 L1900 147 C1907 147 1909 149 1909 155 L1909 169.5 Z" fill="url(#gTabA)" stroke="#424242" stroke-width="0.8"/>
<text x="1800" y="163" font-size="12" fill="#f4f4f4" textLength="73.8" lengthAdjust="spacingAndGlyphs">KSR-SJP-C124</text>
<path d="M1891.5 155l7 7M1898.5 155l-7 7" stroke="#2a2a2a" stroke-width="1.5"/>
<rect x="0" y="172" width="1919" height="1" fill="#707070"/>
</svg>
</body></html>
